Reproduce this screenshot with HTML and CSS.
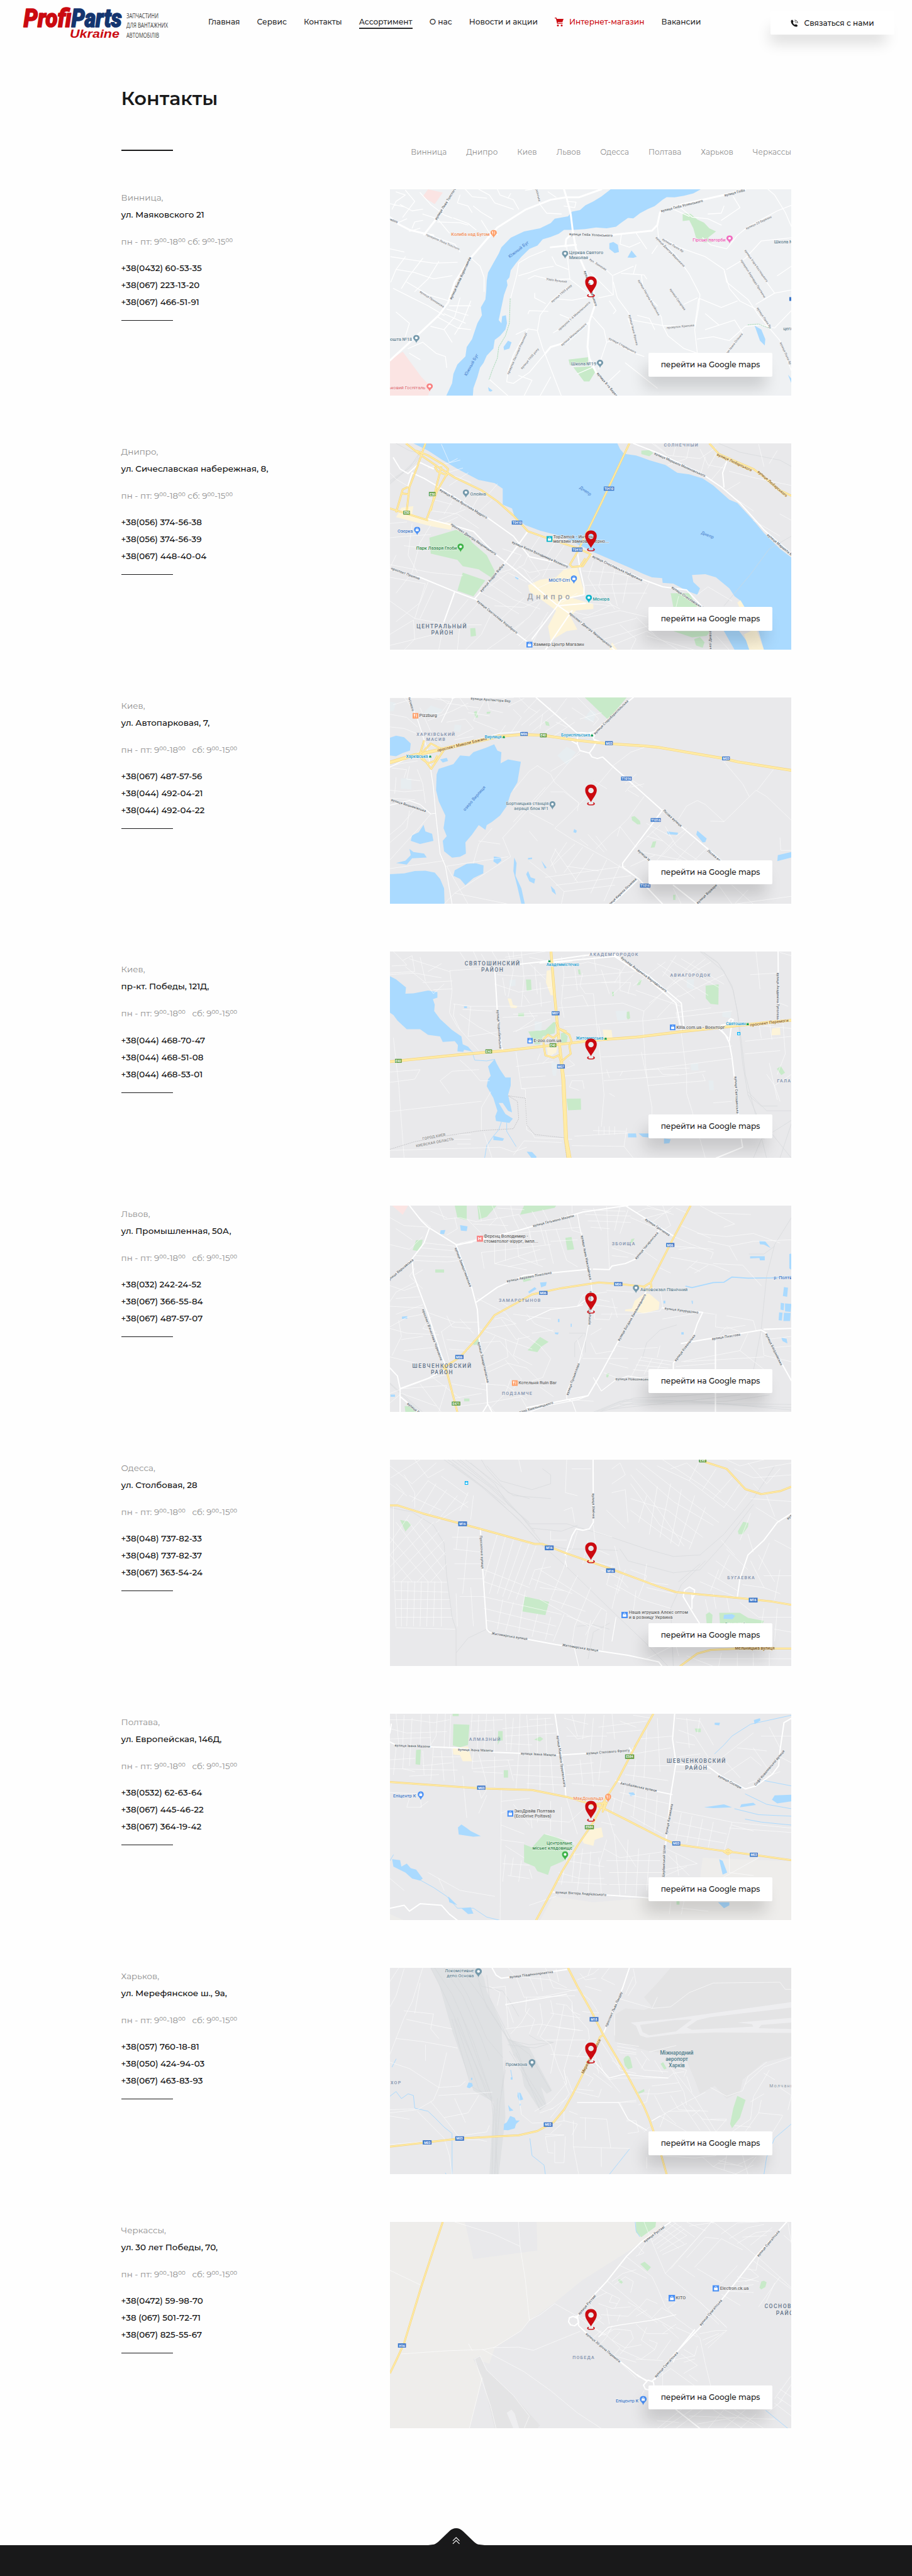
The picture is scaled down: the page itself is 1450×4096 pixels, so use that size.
FILE: index.html
```html
<!DOCTYPE html>
<html lang="ru">
<head>
<meta charset="utf-8">
<title>Контакты</title>
<link rel="stylesheet" href="styles.css">
</head>
<body>
<svg class="defs" aria-hidden="true">
  <symbol id="marker" viewBox="0 0 24 44" preserveAspectRatio="none"><path fill="#cb0a10" fill-rule="evenodd" d="M12 0C5.300 0 0 5.400 0 12c0 9 8 17 12 25 4-8 12-16 12-25C24 5.400 18.700 0 12 0zm0 7.200a5.600 5.600 0 110 11.200 5.600 5.600 0 010-11.200z"/><path fill="none" stroke="#cb0a10" stroke-width="2" d="M7.500 38.500C3 40 5 43 12 43s9-3 4.500-4.500"/></symbol>
  <symbol id="pin" viewBox="0 0 12 17" preserveAspectRatio="none"><path d="M6 0a6 6 0 00-6 6c0 4.200 5 5.500 6 11 1-5.500 6-6.800 6-11a6 6 0 00-6-6z"/><circle cx="6" cy="6" r="2.500" fill="#fff"/></symbol>
  <symbol id="bagpin" viewBox="0 0 12 17" preserveAspectRatio="none"><path d="M6 0a6 6 0 00-6 6c0 4.200 5 5.500 6 11 1-5.500 6-6.800 6-11a6 6 0 00-6-6z"/><path d="M3.200 5h5.600v4H3.200z" fill="#fff"/><path d="M4.500 5c0-2.600 3-2.600 3 0" fill="none" stroke="#fff"/></symbol>
  <symbol id="bag" viewBox="0 0 14 14" preserveAspectRatio="none"><path d="M0 0h14v14H0z"/><path d="M3.200 6h7.600v5H3.200z" fill="#fff"/><path d="M5 6c0-4 4-4 4 0" fill="none" stroke="#fff" stroke-width="1.300"/></symbol>
  <symbol id="food" viewBox="0 0 14 14" preserveAspectRatio="none"><path d="M0 0h14v14H0z"/><path d="M4.500 3v8M9.500 3v8M3.500 3v3h2.200V3" fill="none" stroke="#fff" stroke-width="1.400"/></symbol>
  <symbol id="foodpin" viewBox="0 0 12 17" preserveAspectRatio="none"><path d="M6 0a6 6 0 00-6 6c0 4.200 5 5.500 6 11 1-5.500 6-6.800 6-11a6 6 0 00-6-6z"/><path d="M4.300 3v6.500M7.800 3v6.500M3.500 3v2.500h1.700" fill="none" stroke="#fff"/></symbol>
  <symbol id="metro" viewBox="0 0 9 12" preserveAspectRatio="none"><path d="M0 12L2.500 0 4.500 5 6.500 0 9 12z" fill="#0f9d58"/></symbol>
</svg>

<header class="header">
  <a class="logo" href="#">
    <svg width="240" height="72" viewBox="0 0 240 72">
      <g class="brand"><text x="37.500" y="42.500" textLength="76" lengthAdjust="spacingAndGlyphs" fill="#cb0a10">Profi</text>
      <text x="113.500" y="42.500" textLength="80" lengthAdjust="spacingAndGlyphs" fill="#14356f">Parts</text></g>
      <text class="country" x="111" y="60" textLength="79" lengthAdjust="spacingAndGlyphs">Ukraine</text>
      <g class="tagline"><text x="201" y="28.500" textLength="51" lengthAdjust="spacingAndGlyphs">ЗАПЧАСТИНИ</text>
      <text x="201" y="44" textLength="66" lengthAdjust="spacingAndGlyphs">ДЛЯ ВАНТАЖНИХ</text>
      <text x="201" y="60.200" textLength="52" lengthAdjust="spacingAndGlyphs">АВТОМОБІЛІВ</text></g>
    </svg>
  </a>
  <nav class="nav">
    <a href="#">Главная</a><a href="#">Сервис</a><a href="#">Контакты</a><a href="#" class="active">Ассортимент</a><a href="#">О нас</a><a href="#">Новости и акции</a>
    <a href="#" class="shop"><svg width="14" height="14" viewBox="0 0 14 14"><path fill="#cb0a10" d="M0 0h2.700l.6 2H14l-1.800 5.300H4.800l.2 1.300h7.500v1.200H3.800L1.800 1.200H0z"/><circle cx="5" cy="12.400" r="1.500" fill="#cb0a10"/><circle cx="11" cy="12.400" r="1.500" fill="#cb0a10"/></svg>Интернет-магазин</a><a href="#">Вакансии</a>
  </nav>
  <a class="contact-btn" href="#"><svg width="12" height="12" viewBox="0 0 12 12"><path fill="#19191a" d="M.8 1.600C1.800.4 2.800.1 3.500 1.200l1 1.800c.4.800-.6 1.300-.8 2 .3 1.400 1.500 2.700 2.900 3.300.8 0 1.200-1.200 2-.8l2 1.300c1 .8.200 2-.9 2.700C5.500 12.600-.9 5.700.8 1.600z"/><path fill="none" stroke="#19191a" d="M6.500 3.200c1.400.2 2.200 1 2.400 2.400M6.500 1c2.800.2 4.500 1.900 4.700 4.700"/></svg>Связаться с нами</a>
</header>

<main class="page">
  <h1>Контакты</h1>
  <div class="subnav">
    <span class="rule"></span>
    <nav class="cities"><a href="#">Винница</a><a href="#">Днипро</a><a href="#">Киев</a><a href="#">Львов</a><a href="#">Одесса</a><a href="#">Полтава</a><a href="#">Харьков</a><a href="#">Черкассы</a></nav>
  </div>

  <section class="office">
    <div class="info"><p class="city">Винница,</p><p>ул. Маяковского 21</p><p class="hours">пн - пт: 9⁰⁰-18⁰⁰ сб: 9⁰⁰-15⁰⁰</p><p>+38(0432) 60-53-35</p><p>+38(067) 223-13-20</p><p>+38(067) 466-51-91</p><span class="line"></span></div>
    <div class="map">
      <svg class="pale" viewBox="37 54 1506 1305" preserveAspectRatio="none">
        <g class="hosp"><path d="M180,54 235,75 205,147 160,100zM37,1130 85,1080 155,1240 190,1300 180,1359 37,1359z"/></g>
        <g class="green"><path d="M1135,205 1165,210 1190,245 1215,265 1235,300 1260,320 1230,360 1245,390 1215,390 1185,360 1175,300 1160,250 1135,255zM707,1130 780,1115 780,1165 712,1165zM725,1178 790,1172 808,1205 785,1268 765,1268z"/></g>
        <g class="r1">
          <path d="M60,70 95,90 60,130 45,180M75,150 120,190 160,180M150,75 190,150 240,215 270,235M95,60 130,130 85,230M37,145 90,165M160,210 215,240 260,330M215,260 300,265 330,280M120,300 130,260 160,250M300,90 290,140 330,160 345,200M320,54 345,100 400,110M370,54 410,90 430,140 500,180M350,160 380,200 420,240M440,54 450,90 500,120 520,180M585,54 600,150 625,205 680,210M630,70 660,105M700,130 735,135 730,170 690,160"/>
          <path d="M275,235 330,270 360,310M380,250 410,330 440,340M180,340 280,400 300,450M40,480 120,500 200,520 290,515M60,560 130,580 200,620 270,600M95,480 60,560 40,640M160,490 110,600 80,680M220,510 180,620 130,700M50,680 120,740 180,790 240,850M100,640 180,720 260,760M260,790 340,790M250,810 330,850M240,840 320,900M215,860 290,930 340,940M300,740 280,860 240,940M340,760 310,890 280,970M60,830 110,900 90,1010M190,920 240,940 270,1020M105,1060 160,1020 210,1090 245,1110 250,1180M110,1090 150,1130M340,487 375,540 390,610 390,700"/>
          <path d="M620,440 560,480 520,520 512,600 490,740M520,600 560,580 600,555 650,540M555,620 580,600 640,625 710,620 800,735M645,480 660,530 705,560M700,415 705,520 712,620M740,440 790,500 840,550 872,600 875,720 820,740M875,597 950,540M905,585 990,595 1000,620M790,580 870,715M780,735 720,755 650,745M705,670 640,760 600,850 590,950 610,1060 620,1100 680,1359M580,710 580,740 620,775M555,840 560,820 630,825M555,935 590,945M555,935 500,1100 480,1200 475,1270 500,1280 560,1210 620,1090M770,785 680,930 650,960M675,845 710,870"/>
          <path d="M860,760 885,820 875,840M875,640 890,740 930,830 945,880 1060,915 1080,980 1140,1060 1190,1089M980,595 985,660 1030,800 1055,860 1060,915 1180,920 1195,745M795,855 840,940 850,1020 870,1010 940,1080 990,1110M850,1020 830,1120 820,1190M1040,280 1045,370 1110,470 1160,590 1200,720 1195,800 1180,940 1190,1089M1070,370 1120,420 1220,480 1290,560 1310,680 1350,760 1410,810M1200,745 1280,800 1340,760M1120,160 1170,230 1230,240 1280,280M1100,180 1160,225M1230,210 1280,205 1290,160M1325,100 1350,170 1280,250M1455,54 1480,90 1520,200 1543,290M1543,155 1490,190 1380,290 1340,345 1300,430 1240,405 1210,360"/>
          <path d="M1380,450 1410,540 1450,640 1480,710M1300,560 1370,490 1430,380 1543,360M1290,560 1300,640 1380,750 1420,850 1460,930 1500,1010 1543,1200M1360,510 1400,620 1440,740M1190,1000 1250,985 1310,1010 1370,920 1430,910 1480,930 1543,820M1410,780 1480,710 1543,690M1490,600 1543,540M1300,1080 1340,1000M1220,940 1330,880 1360,960M1220,840 1270,910M1010,740 1040,790M965,850 1010,870 1030,940M930,870 950,960M740,1220 795,1180M520,1230 570,1260 540,1359M410,1255 480,1359M640,1240 600,1359M900,1200 850,1280M920,1150 1040,1310"/>
          <path d="M905,340 900,400 935,420 975,390M960,330 1000,430M1040,410 1020,460M545,60 570,54M490,80 480,110M60,270 100,240M110,320 150,300M37,430 90,450M1140,780 1190,740M960,530 950,590M510,970 555,935"/>
        </g>
        <path class="path-dash" d="M488,745 485,900 470,980 445,1050 440,1120 420,1200 409,1255M1380,910 1420,905 1465,935"/>
        <g class="water"><path d="M865,54 1203,54 1175,80 1140,95 1105,105 1075,104 1060,120 1030,160 1005,178 975,205 950,238 930,235 905,265 885,290 850,300 810,295 770,305 725,310 690,310 670,335 640,355 610,370 590,410 560,430 530,480 510,520 490,565 485,610 475,630 478,660 465,720 460,760 455,800 445,880 455,900 458,855 472,850 476,900 470,940 450,980 430,1005 425,1060 400,1105 388,1150 375,1180 365,1240 350,1310 348,1359 248,1359 270,1280 275,1220 290,1160 320,1110 325,1050 345,1000 355,950 365,900 382,850 378,800 395,750 398,700 400,630 405,580 425,520 445,460 455,420 490,360 540,320 600,300 640,268 655,240 705,225 720,195 750,185 770,155 800,130 830,100zM860,395 875,387 892,405 896,450 880,457 860,430zM943,440 963,480 950,487 928,485zM1405,915 1430,940 1445,1000 1443,1040 1425,1010zM480,1010 493,1020 485,1060 465,1070 463,1050zM405,1303 422,1325 415,1332 408,1328zM1530,1225 1543,1250 1543,1280z"/></g>
        <g class="r3"><path d="M37,230 70,275 110,310 170,335 200,345M165,340 230,200 278,60M37,1135 150,960 220,850 255,770 280,640 340,487 400,370 440,295 545,183 640,120 695,105 745,105 830,54M690,54 700,110 715,210 723,320 735,430 760,530 800,680 805,790 785,890 778,1050 785,1120 810,1210 890,1359M695,415 698,370 715,340 870,342 1020,315 1040,280 1050,200 1130,150 1290,90 1370,54"/><path d="M800,735 805,790M640,420 735,405M620,1090 640,1050 700,1020 780,900"/></g>
        <g class="s"><text x="791" y="341" style="--a:2deg">вулиця Гліба Успенського</text><text x="1132" y="158" style="--a:-14deg">вулиця Гліба Успенського</text><text x="1330" y="75" style="--a:-15deg">вулиця Гліба</text><text x="245" y="145" style="--a:-58deg">вулиця Льва Толстого</text><text x="301" y="615" style="--a:-65deg">вулиця Князів Коріатовичів</text><text x="50" y="250" style="--a:24deg">ького</text><text x="790" y="680" style="--a:72deg">вулиця Маяковського</text><text x="852" y="1286" style="--a:50deg">вулиця 8-го Берез</text></g>
        <g class="s thin"><text x="236" y="385" style="--a:24deg">провулок Льва Толстого</text><text x="1089" y="448" style="--a:46deg">вулиця Дмитра Марковича</text><text x="1099" y="407" style="--a:31deg">вулиця Палія Яр</text><text x="1420" y="263" style="--a:-25deg">вулиця 20 Березня</text><text x="1412" y="537" style="--a:55deg">вулиця Ігоря Костецького</text><text x="1400" y="618" style="--a:58deg">провулок Бернарда Претвича</text><text x="726" y="970" style="--a:-41deg">вулиця Маяковського</text><text x="728" y="853" style="--a:-42deg">провулок 1-й Маяковського</text><text x="680" y="710" style="--a:-40deg">вулиця 1905 року</text><text x="561" y="1122" style="--a:-50deg">вулиця 1905 року</text><text x="513" y="1090" style="--a:-66deg">провулок Лютневої Революції</text><text x="951" y="943" style="--a:76deg">вулиця Івана Франка</text><text x="1009" y="738" style="--a:60deg">вулиця Нагірна Альпійська</text><text x="1117" y="749" style="--a:55deg">вулиця Суворова</text><text x="1127" y="919" style="--a:-5deg">провулок Крилова</text><text x="910" y="1039" style="--a:28deg">вулиця Старицького</text><text x="1441" y="865" style="--a:57deg">вулиця Палія Яр</text><text x="818" y="528" style="--a:33deg">вул. Замкова</text><text x="195" y="747" style="--a:33deg">вулиця Примакова</text><text x="592" y="80" style="--a:76deg">Українська</text><text x="1522" y="1090" style="--a:66deg">вулиця Палія Яр</text><text x="662" y="628" style="--a:8deg">Узвіз Бузький</text><text x="1321" y="1042" style="--a:-52deg">вулиця Івана Огієнка</text></g>
        <g class="s river"><text x="520" y="435" style="--a:-38deg">Южный Буг</text><text x="343" y="1163" style="--a:-61deg">Южный Буг</text></g>
        <g class="e"><text x="411" y="338" fill="#f2905a">Колиба над Бугом</text><text x="1296" y="372" fill="#ee5fb7">Гірські пагорби</text><text x="811" y="1158">Школа №19</text><text x="170" y="1307" fill="#e8797d">ьковий Госпіталь</text><text x="120" y="1001">пошта №18</text></g>
        <g class="l"><text x="709" y="454">Церква Святого</text><text x="709" y="484">Миколая</text><text x="1478" y="385">Школа №</text><text x="1512" y="934">цегл</text></g>
        <use href="#foodpin" x="414" y="310" width="24" height="52" fill="#ff9e67"/><use href="#pin" x="1299" y="345" width="24" height="52" fill="#f06fc0"/><use href="#pin" x="682" y="441" width="24" height="52" fill="#7599ab"/><use href="#pin" x="813" y="1131" width="24" height="52" fill="#7599ab"/><use href="#pin" x="124" y="974" width="24" height="52" fill="#7599ab"/><use href="#pin" x="174" y="1280" width="24" height="52" fill="#f88181"/>
        <rect class="bb" x="1535" y="735" width="20" height="24"/>
        <use href="#marker" x="769" y="603" width="44" height="133"/>
      </svg>
      <a class="map-btn" href="#">перейти на Google maps</a>
    </div>
  </section>

  <section class="office">
    <div class="info"><p class="city">Днипро,</p><p>ул. Сичеславская набережная, 8,</p><p class="hours">пн - пт: 9⁰⁰-18⁰⁰ сб: 9⁰⁰-15⁰⁰</p><p>+38(056) 374-56-38</p><p>+38(056) 374-56-39</p><p>+38(067) 448-40-04</p><span class="line"></span></div>
    <div class="map">
      <svg viewBox="37 54 1506 1305" preserveAspectRatio="none">
        <g class="water"><path d="M125,54 890,54 900,90 915,120 960,130 1010,160 1070,190 1115,240 1160,250 1210,275 1250,320 1310,410 1340,430 1400,540 1440,620 1500,720 1543,775 1543,1359 1440,1359 1420,1240 1350,1045 1330,1020 1310,970 1260,900 1220,880 1170,885 1175,930 1200,970 1190,1010 1150,985 1100,940 1060,935 1058,905 1020,900 990,880 930,835 800,740 740,690 680,640 600,605 545,570 505,520 495,465 460,440 460,340 430,305 370,285 290,215 235,160 180,100zM1210,1089 1280,1089 1400,1359 1330,1359 1290,1240zM330,710 335,770 315,765 308,735zM505,893 520,905 517,915 508,905z"/></g>
        <g class="sand"><path d="M1340,1060 1352,1045 1400,1180 1440,1359 1385,1359 1365,1260 1390,1240zM80,460 125,450 120,500 180,540 270,560 265,600 200,580 175,570 60,520zM690,850 740,840 760,960 770,1010 720,1030 800,1070 800,1100 735,1110 715,1150 740,1230 700,1240 640,1300 630,1210 660,1110 620,1060 560,990 555,950 600,915 660,900zM870,1310 890,1359 860,1359z"/></g>
        <g class="green"><path d="M285,600 330,640 345,680 400,760 430,860 425,910 370,850 310,830 290,790 190,750 185,650zM310,870 395,920 350,1020 290,985zM980,100 1010,97 1025,115 1010,135 980,122zM1090,1000 1160,1000 1190,1089 1100,1089zM1100,1240 1240,1240 1225,1270 1170,1280zM1178,1290 1200,1278 1217,1310 1210,1345 1185,1330zM338,1222 357,1220 360,1270 340,1275z"/></g>
        <g class="rail"><path d="M37,290 90,230 140,150 150,100 170,60M37,300 110,210 145,120M60,54 110,100 160,120 130,180 37,310M1270,54 1350,110 1500,160 1543,200M1543,640 1460,720 1390,880 1290,1080"/></g>
        <g class="r1">
          <path d="M230,60 260,175 290,150M180,210 300,160M250,240 310,210M330,240 260,320M280,260 340,300M440,310 400,390M340,340 300,470M380,360 340,480M420,410 360,500M180,400 270,440M190,480 290,500 370,590M220,540 320,470M280,390 240,500M240,560 290,520M37,240 60,280 100,320M37,560 100,550M37,650 100,640 190,630M120,560 105,760 140,870M190,570 150,680 120,870 60,1000M37,820 190,870 310,890M90,700 180,720M37,900 170,940 130,1160M60,760 37,840M180,930 150,1060 60,1180M37,1050 130,1160 260,1200 380,1200M37,1260 125,1170 130,1290 90,1359M280,1000 240,1180 220,1359M37,1330 230,1250M330,1040 260,1180M200,980 150,1160M370,1060 300,1190 290,1359M420,1120 380,1260 320,1359"/>
          <path d="M410,960 480,870 550,930M380,1000 440,1050 520,1130M410,940 500,1040 600,1100M440,890 530,1000M550,610 520,700 460,820M460,720 530,760 490,850 450,870M600,640 560,740 540,820 500,860M660,670 620,780M690,700 650,800M520,830 560,870 620,850 700,850M560,780 600,880 560,930M640,800 610,900M540,850 590,970 680,900M760,860 870,870 960,900 1000,940M800,800 780,900 830,1040 900,1100M840,830 820,960 880,1100M880,850 870,950 890,1080M770,950 980,940M780,1000 1000,1000M930,890 910,1060M1010,930 960,1100M760,1060 870,1080M680,1060 740,1000M700,1110 780,1140 860,1080M430,1080 540,1090 620,1020M450,1170 500,1090 540,1030M490,1240 560,1150 600,1060M520,1330 600,1200 630,1120M400,1359 500,1240 540,1180M610,1180 560,1359M760,1160 900,1110 1000,1150M800,1230 960,1160M840,1290 1020,1200M870,1330 1000,1240 1120,1359M900,1200 960,1290 940,1359M960,1150 1040,1280M1000,1270 1180,1359M1260,1270 1310,1359"/>
          <path d="M1020,54 1080,130 1200,150 1260,80M1110,60 1100,130M1160,70 1150,150 1080,190M1200,90 1230,190 1290,210M1070,110 1030,60M1140,200 1200,230M1220,140 1200,260M1260,120 1230,210M1300,170 1240,290M1350,300 1300,350M1310,230 1400,270 1543,320M1420,60 1440,200M1490,100 1460,180M1330,400 1400,480M1400,540 1500,640M1500,500 1543,540M1190,1010 1230,960 1320,1050M1100,980 1200,1089M1110,1089 1120,1020"/>
        </g>
        <g class="r3"><path d="M50,145 75,215 105,245 150,175 200,215M103,330 120,240 165,275 240,350 400,520 500,640 560,770 700,820M175,530 280,575 350,610 430,750 520,870 660,1070 720,1140 880,1359M37,850 150,900 280,990 360,1040 500,1240 570,1330M280,990 240,1180M355,1035 465,815 555,610M740,740 750,850 765,960 765,1010 680,1040 665,1080 770,1065M665,1080 570,1290M720,1110 620,1359M950,54 1050,120 1210,250 1280,330 1350,430 1440,600 1543,750M1300,170 1285,240 1290,330M780,750 980,910 1060,960 1150,980 1210,1089"/></g>
        <g id="y2"><path d="M97,54 150,125 215,200 280,270 380,350 440,420 500,510 555,610 640,660 740,715 790,755 760,830 720,835 712,820 740,740 830,430 935,54M770,780 750,830M170,54 140,200 110,330 100,480M250,250 215,350 175,530M135,100 180,130 240,190 255,215 250,255 215,230 205,200M105,330 85,345 60,490M105,375 80,370M37,465 180,540M1235,54 1270,120 1330,165 1400,215 1450,280 1500,350 1543,385M230,200 215,300 190,480"/></g>
        <use class="yc" href="#y2"/><use class="yi" href="#y2"/>
        <g class="s"><text x="313" y="435" style="--a:31deg">вулиця Князя Ярослава Мудрого</text><text x="351" y="658" style="--a:34deg">проспект Дмитра Яворницького</text><text x="600" y="755" style="--a:24deg">вулиця Князя Володимира Великого</text><text x="890" y="842" style="--a:26deg">вулиця Січеславська Набережна</text><text x="1155" y="1030" style="--a:34deg">вулиця Січеславська Н</text><text x="1125" y="188" style="--a:24deg">вулиця Маршала Малиновського</text><text x="1500" y="695" style="--a:40deg">вулиця Маршала М</text><text x="420" y="903" style="--a:-50deg">вулиця Андрія Фабра</text><text x="95" y="875" style="--a:20deg">проспект Пушкіна</text><text x="440" y="1150" style="--a:39deg">вулиця Святослава Хороброго</text><text x="790" y="1233" style="--a:39deg">проспект Дмитра Яворницького</text><text x="1238" y="1300" style="--a:-90deg">ської Дивізії</text></g>
        <g class="s amber"><text x="1330" y="172" style="--a:25deg">вулиця Любарського</text><text x="1473" y="308" style="--a:41deg">вулиця Любарського</text></g>
        <g class="s river"><text x="770" y="355" style="--a:35deg">Днепр</text><text x="1228" y="634" style="--a:22deg">Днепр</text></g>
        <g class="d"><text x="232" y="1208">ЦЕНТРАЛЬНЫЙ</text><text x="234" y="1248">РАЙОН</text></g><g class="d sub"><text x="1130" y="66">СОЛНЕЧНЫЙ</text></g>
        <text class="town" x="637" y="1021">Днипро</text>
        <g class="l dark"><text x="649" y="643">TopZamok - Интерне</text><text x="649" y="673">магазин замков, дверно...</text><text x="575" y="1322">Хаммер Центр Магазин</text></g>
        <g class="l"><text x="338" y="374">Олейна</text><text x="798" y="1039" fill="#24959c">Менора</text></g>
        <g class="e"><text x="123" y="609" fill="#4479c5">Озерка</text><text x="288" y="716" fill="#2a8740">Парк Лазаря Глоби</text><text x="712" y="917" fill="#4479c5">МОСТ-Сіті</text></g>
        <use href="#pin" x="310" y="345" width="24" height="54" fill="#7599ab"/><use href="#bagpin" x="127" y="580" width="24" height="54" fill="#4a90f5"/><use href="#pin" x="290" y="687" width="24" height="54" fill="#3eb349"/><use href="#bagpin" x="715" y="888" width="24" height="54" fill="#4a90f5"/><use href="#pin" x="771" y="1009" width="24" height="54" fill="#12b5cb"/><use href="#bag" x="624" y="639" width="23" height="38" fill="#12b5cb"/><use href="#bag" x="549" y="1306" width="23" height="38" fill="#4a90f5"/>
        <rect class="bb" x="839" y="327" width="39" height="26"/><rect class="bb" x="494" y="542" width="39" height="25"/><rect class="bb" x="720" y="712" width="39" height="26"/><rect class="bg" x="183" y="361" width="25" height="26"/><rect class="bg" x="87" y="480" width="25" height="24"/>
        <g class="bt"><text x="858" y="341">T0410</text><text x="514" y="555">T0410</text><text x="740" y="725">T0410</text><text x="196" y="374">E50</text><text x="100" y="492">E50</text></g>
        <use href="#marker" x="769" y="603" width="44" height="133"/>
      </svg>
      <a class="map-btn" href="#">перейти на Google maps</a>
    </div>
  </section>

  <section class="office">
    <div class="info"><p class="city">Киев,</p><p>ул. Автопарковая, 7,</p><p class="hours">пн - пт: 9⁰⁰-18⁰⁰ &nbsp; сб: 9⁰⁰-15⁰⁰</p><p>+38(067) 487-57-56</p><p>+38(044) 492-04-21</p><p>+38(044) 492-04-22</p><span class="line"></span></div>
    <div class="map">
      <svg viewBox="37 54 1506 1305" preserveAspectRatio="none">
        <g class="green"><path d="M768,54 925,54 855,195zM352,145 362,138 368,180 358,182zM400,145 415,143 412,155 400,157zM618,202 632,210 636,235 622,230zM943,808 955,804 975,835 977,855 965,855 945,830zM1023,965 1036,962 1030,1000 1015,1003zM85,598H93V627H85zM1099,1300H1108V1333H1099z"/></g>
        <g class="pool"><path d="M37,80 60,90 50,140 37,140zM190,105 235,130 210,180 165,150zM665,420 700,365 735,400 700,480zM790,130 810,150 800,210 765,190zM280,225 305,230 300,275 277,265zM78,565 117,565 117,635 78,630z"/></g>
        <g class="water"><path d="M37,308 60,295 90,305 115,345 112,390 85,405 60,425 37,420zM220,505 275,475 300,420 335,425 350,400 400,370 428,350 440,390 455,400 452,470 480,445 528,460 520,540 515,590 490,660 475,740 450,800 420,840 400,860 395,890 370,860 345,920 320,970 322,1040 300,1060 270,1066 240,1025 235,960 250,930 238,880 245,800 220,710 210,640 212,540zM225,445 250,435 255,455 235,465zM163,858 170,900 195,915 200,960 150,980 115,960 120,925 145,905zM325,1105 360,1102 388,1115 387,1165 350,1195 320,1240 300,1200 275,1180 280,1145zM427,1058 452,1065 455,1085 440,1107 425,1090zM37,1170 90,1165 130,1150 170,1148 205,1160 225,1200 240,1260 242,1359 37,1359zM503,1065 512,1100 508,1180 530,1260 543,1359 530,1359 515,1250 500,1150zM555,1150 565,1190 582,1200 578,1230 560,1215 548,1170zM605,1085 625,1130 618,1135zM1076,900 1118,908 1115,922 1080,918zM1190,895 1225,945 1220,968 1210,970 1186,920zM728,885 738,895 735,910 725,905zM1492,1050 1543,1030 1543,1065 1490,1088zM110,1010 125,1030 165,1040 175,1065 120,1070 100,1110 60,1100 95,1085 115,1050zM640,1245 655,1270 660,1300 645,1280zM555,1068 570,1065 570,1075 555,1078z"/></g>
        <g class="r1">
          <path d="M37,160 100,180 140,240M50,100 110,70M90,54 120,120M37,240 90,250 150,290M180,54 260,80 230,150 170,170M180,200 270,140 330,90M150,120 190,270 230,350M250,210 320,190 350,250 290,300M220,54 250,90 370,120M390,80 350,200 440,260M330,150 410,170M400,54 410,130 460,150M300,60 330,130M430,90 470,60 480,90M470,230 450,280M500,130 530,180 490,280M520,54 560,120 590,150M590,60 540,150M480,110 540,60M530,230 600,130M570,270 660,150M600,250 610,160M640,120 560,230M620,270 700,180M650,300 730,210M660,210 700,240M700,60 660,150M740,54 820,190 800,230M720,120 800,210M750,190 830,150M280,320 350,300M37,490 80,470 140,455M45,500 100,510 90,560M110,490 100,570 150,580M37,640 90,650 160,640M37,690 130,700M60,560 55,660M140,510 160,600 170,720M130,760 80,860 37,920M190,790 150,870 80,1000 37,1080"/>
          <path d="M750,390 700,480 650,580 520,830 460,940 480,1020 490,1060 280,1290 240,1359M590,485 640,540 655,590 745,720M590,485 560,520 500,640M875,490 800,640 700,810 655,880 720,950 860,1080 970,1200M650,860 560,780M640,650 690,650 745,720 740,770M560,720 620,770M620,620 500,840M420,880 370,980 350,1100M370,960 450,980M590,960 560,900M655,1010 700,1120 740,1220M660,1010 640,1080 660,1160M560,1090 630,1180 690,1280 880,1240M690,1280 680,1359M730,980 650,1110M760,1000 690,1160M800,1040 730,1210M850,1080 790,1290M900,1110 840,1340M620,1190 920,1120M660,1240 940,1180M700,970 640,1120M750,950 780,990M780,920 840,1030M810,930 850,1020M700,1120 820,1150M890,930 900,870 870,910 810,1010M900,870 960,1000M990,680 930,820 900,870M800,580 850,630M920,600 960,540M940,620 990,600M930,640 970,680M920,650 950,590M930,560 985,620"/>
          <path d="M750,410 640,520M870,490 940,400 990,370M1070,870 1110,990 1190,1080M1050,860 960,1000M1000,850 1090,930M1100,960 1030,1100M1150,900 1060,1050M1180,960 1090,1120M1230,1000 1130,1160M1020,900 1130,1060 1230,1160M1000,1080 1100,1150M980,1030 1130,1080M940,1120 1030,1050M1110,930 1150,880M1000,930 1060,960M1290,460 1360,600 1385,680M1475,510 1415,640M1120,820 1150,740 1190,705 1220,730 1290,838 1350,740 1410,640 1450,680 1543,830M1240,835 1290,838M1500,940 1503,1020 1543,1020M1100,1260 1130,1359M1240,1170 1320,1359M1320,1240 1400,1359M1380,1270 1330,1359 1543,1310M250,1120 480,1060M37,1135 240,1085M250,1120 330,1359M280,1290 480,1359M37,970 100,880 110,770"/>
        </g>
        <g class="r2"><path d="M105,54 140,190 180,400 200,620 208,780 225,1040 245,1120 270,1359M185,350 230,380 215,360M145,400 37,495M275,54 230,210M208,785 190,790 150,730 110,705 37,735M37,55 500,54M230,380 450,280 530,270"/></g>
        <g class="r3"><path d="M585,54 740,280M950,54 900,120 805,270 780,280M740,280 755,275 780,280 805,290 800,310 810,340 800,370 785,405 750,390 740,350zM805,320 840,345M720,330 740,350M785,405 795,430 815,440 835,430 870,485 1060,770 1250,1040 1310,1130M1060,765 910,1100 910,1125 970,1200 1060,1359M1100,1240 1190,1359M965,1210 870,1359M1260,1240 1185,1359M270,60 280,54"/></g>
        <g id="y3"><path d="M37,467 120,425 240,380 450,300 530,288 610,293 740,325 850,345 990,360 1040,368 1290,440 1340,460 1543,515M37,462 120,420 240,376 450,295"/></g>
        <use class="yc wide" href="#y3"/><use class="yi wide" href="#y3"/>
        <g id="y3b"><path d="M165,325 150,410 192,505 240,385 220,370 190,345 165,390 150,410 155,440 180,470 205,455 215,420"/></g>
        <use class="yc" href="#y3b"/><use class="yi" href="#y3b"/>
        <g class="s"><text x="415" y="68" style="--a:4deg">вулиця Архітектора Вер</text><text x="866" y="178" style="--a:-45deg">вулиця Старобориспільська</text><text x="116" y="88" style="--a:75deg">ульського</text><text x="107" y="735" style="--a:18deg">вулиця Вишняківська</text><text x="1097" y="816" style="--a:42deg">Лісова вулиця</text><text x="1255" y="1055" style="--a:40deg">Лісова вул</text><text x="993" y="1055" style="--a:42deg">вулиця Іва</text><text x="905" y="1287" style="--a:-44deg">вулиця Кирила Осьмака</text><text x="1225" y="1295" style="--a:-44deg">вулиця Варвари</text></g>
        <g class="s amber big"><text x="308" y="351" style="--a:-14deg">проспект Миколи Бажана</text></g>
        <g class="s river"><text x="354" y="692" style="--a:-49deg">озеро Вирлиця</text></g>
        <g class="d sub"><text x="210" y="287">ХАРКІВСЬКИЙ</text><text x="210" y="319">МАСИВ</text></g>
        <g class="l"><text x="147" y="168" fill="#666">Pizzburg</text></g>
        <g class="e teal"><text x="456" y="305">Вирлиця</text><text x="180" y="426">Харківська</text><text x="788" y="292">Бориспільська</text></g>
        <g class="e"><text x="632" y="723">Бортницька станція</text><text x="632" y="754">аерації блок №1</text></g>
        <use href="#metro" x="459" y="295" width="10" height="16"/><use href="#metro" x="183" y="418" width="10" height="16"/><use href="#metro" x="790" y="284" width="10" height="16"/>
        <use href="#food" x="122" y="151" width="22" height="37" fill="#ff9e67"/><use href="#pin" x="635" y="709" width="23" height="54" fill="#7599ab"/>
        <rect class="bb" x="526" y="272" width="28" height="25"/><rect class="bg" x="600" y="281" width="25" height="25"/><rect class="bb" x="844" y="330" width="29" height="25"/><rect class="bb" x="1283" y="427" width="29" height="24"/><rect class="bb" x="904" y="554" width="40" height="25"/><rect class="bb" x="1015" y="816" width="38" height="24"/><rect class="bb" x="975" y="1230" width="39" height="25"/>
        <g class="bt"><text x="540" y="284">M06</text><text x="612" y="294">E40</text><text x="859" y="343">M03</text><text x="1298" y="440">M03</text><text x="924" y="567">T1016</text><text x="1034" y="828">T1016</text><text x="994" y="1243">T1016</text></g>
        <use href="#marker" x="769" y="603" width="44" height="133"/>
      </svg>
      <a class="map-btn up" href="#">перейти на Google maps</a>
    </div>
  </section>

  <section class="office">
    <div class="info lower"><p class="city">Киев,</p><p>пр-кт. Победы, 121Д,</p><p class="hours">пн - пт: 9⁰⁰-18⁰⁰ &nbsp; сб: 9⁰⁰-15⁰⁰</p><p>+38(044) 468-70-47</p><p>+38(044) 468-51-08</p><p>+38(044) 468-53-01</p><span class="line"></span></div>
    <div class="map">
      <svg viewBox="37 54 1506 1305" preserveAspectRatio="none">
        <g class="green"><path d="M547,231H566L568,298 550,302zM518,443 540,441 540,465 518,465zM556,560 620,550 650,500 660,500 655,570 610,590 600,640 580,640zM678,570 690,565 704,590 700,630 678,632zM699,984 753,983 754,1053 705,1057zM1221,270 1270,262 1269,390 1240,385 1222,350zM925,435 935,432 938,475 930,483 924,470zM972,235 982,230 975,265 963,268zM742,168 750,166 753,200 745,198zM870,308H877V335H870zM1488,795 1503,778 1519,820 1505,835z"/></g>
        <g class="pool"><path d="M485,235 508,230 508,270 485,275zM580,495 607,500 605,555 580,550zM642,755 665,755 660,840 648,840zM883,430 925,425 925,485 890,490zM1165,765 1192,760 1195,805 1168,805zM1232,870 1250,868 1252,930 1235,930zM1285,435 1318,433 1315,475 1283,465zM1150,230 1178,230 1175,295 1150,280z"/></g>
        <g class="sand"><path d="M478,350 492,352 498,390 516,400 510,412 490,410zM625,175 640,170 650,330 640,330 622,250zM835,548 868,550 872,600 840,600zM625,660 665,660 660,695 630,715zM1470,540 1500,535 1502,580 1468,583z"/></g>
        <g class="water"><path d="M37,210 60,230 97,280 95,320 125,318 180,300 215,310 215,345 198,355 205,390 203,430 225,480 270,550 305,590 310,640 330,655 345,685 315,675 312,688 290,685 292,645 280,620 235,625 225,590 180,580 150,545 100,545 65,490 50,455 37,440zM430,733 437,760 450,800 470,850 490,850 490,900 480,960 490,1030 495,1070 480,1060 460,1010 445,1010 470,1080 498,1110 485,1137 435,1125 432,1095 440,1060 425,980 400,905 405,860 415,840 405,780zM930,1203 960,1203 962,1228 930,1228zM970,1203 1007,1203 1007,1228 985,1225zM1065,1235 1090,1240 1085,1265 1065,1268zM550,1318 570,1320 587,1350 585,1359 568,1359zM425,1218 465,1235 460,1250 425,1245zM315,400H326V412H315z"/></g>
        <g class="stream"><path d="M345,685 355,740 400,745 430,735M455,1130 445,1180 425,1220 400,1280 392,1359M475,1137 475,1190 510,1285"/></g>
        <g class="rail"><path d="M1205,54 1270,130 1320,270 1340,430 1360,760 1380,960 1420,1110 1440,1240M1200,54 1290,180M1215,60 1265,120 1290,180 1325,300 1345,480 1370,830 1400,1030 1450,1359M1380,960 1430,1030 1490,1030M1380,940 1450,1060 1543,1060M1543,1120 1430,1240 1400,1359M1543,1140 1500,1359M1410,1080 1543,1359"/></g>
        <g class="r1">
          <path d="M50,54 90,120 100,140 45,145M85,110 120,80 130,180 37,190M110,100 260,180M95,150 170,250 200,320 240,260M150,90 170,240M37,200 130,190 230,220M230,130 180,180M262,175 430,155M262,175 270,300 260,440 290,530 370,680M270,240 160,250M200,295 270,290M275,385 340,400 540,400 640,370M280,385 275,460 300,550M310,420 420,430M300,450 370,530 450,600M340,400 330,590 450,560M420,54 440,110 530,90M440,200 530,210 620,200M480,60 500,170 480,340M530,54 540,220 530,400M560,130 620,230M430,260 520,310 640,280M460,220 470,330M580,150 590,320M500,450 640,440M460,470 590,460M500,560 640,480M540,330 560,380M600,250 605,400M640,120 560,90"/>
          <path d="M680,90 690,190 680,380 690,470M700,150 780,120 900,170M690,220 960,180M680,270 900,240M760,190 750,270 770,320 800,320 835,860 840,960 830,1160M670,410 910,380 990,430 985,480 995,760 1005,900M690,530 1000,490 1320,430M690,350 760,330 780,400M730,160 740,300M800,54 810,180M830,170 860,320M900,170 900,300 960,330M830,250 940,250 930,320M920,140 880,250M950,200 870,330M820,520 830,600M1040,470 1120,330M990,430 1180,110M960,300 1130,400M950,270 1070,120M1010,380 1220,100M1060,180 1180,350M1000,220 1120,380M1040,130 1230,330M1090,110 1270,280M1130,100 1290,260M1120,340 1290,200M1100,260 1240,120M1110,80 1060,210M1240,410 1110,440 1130,560M830,720 1130,690 1320,650M690,840 1000,800 1160,790M840,870 1120,835 1220,810M1000,800 1320,730M1005,900 1220,870 1210,830M1130,570 1150,830 1150,950 1170,1060 1220,1359M980,690 1000,850M1040,790 1060,830 1120,830M710,740 730,770 700,790M860,850 850,800M900,840 910,810M720,870 760,870 765,920M720,870 710,910 745,930M860,950 880,970"/>
          <path d="M510,690 530,920 690,900M530,920 545,925 550,1180 570,1200 580,1230 720,1240M510,780 650,750M530,850 620,840M37,880 130,860 150,800 37,815M50,600 70,900 90,1359M225,870 270,810 370,800M225,870 260,950M300,740 340,800 375,870 410,870M37,1065 380,1000M415,940 380,1040 380,1180M290,1210 340,1210M280,1240 340,1240M290,1270 340,1270M37,1310 450,1290 500,1320 550,1290M390,1200 420,1359M500,1340 540,1250 680,1260M720,1280 915,1285 950,1359M915,1285 925,1170M820,1160 820,1210M840,1160 840,1210M860,1160 860,1210M880,1160 880,1210M800,1185 920,1190M730,1220 930,1200M1005,900 1020,1040 1020,1089M1250,1010 1320,1000M1450,830 1480,900 1500,1000M1460,760 1490,990M1543,830 1480,900M1410,54 1420,200 1425,290M1500,60 1543,80M1500,380 1530,400M1350,510 1543,540M1420,500 1430,600M1460,490 1470,610M1510,480 1520,700 1490,830M1370,620 1543,590M1370,700 1500,680"/>
          <path d="M470,90 620,54M300,60 340,160M350,54 380,160M380,70 410,160M600,700 590,740M610,760 650,700M500,54 500,90M560,430 580,480 510,560M760,580 780,690M900,54 870,90M800,60 760,90M1390,200 1490,190"/>
        </g>
        <path class="border" d="M37,1303 130,1255 240,1220 380,1185 500,1173 520,1110 515,1000 480,965 545,980 550,1150 580,1210 690,1230 700,1359"/>
        <g class="r3"><path d="M525,133 600,120 770,78 800,75M600,127 880,85 1000,220 1110,380 1130,555M880,75 1010,210 1130,380 1140,550M640,127 720,112M1493,54 1495,450 1495,495M430,160 440,440 455,660 460,672M1270,540 1295,580 1310,630 1320,720 1345,1089M1310,620 1320,500 1325,485 1315,478 1308,490 1310,510 1280,520 1275,540 1305,600M1355,1240 1360,1290 1260,1359M1120,560 1145,555"/></g>
        <g id="y4"><path d="M37,750 300,705 470,680 650,645 800,615 960,595 1130,560 1270,535 1460,500 1543,488M641,54 655,340 670,600 690,870 700,1240 713,1359M675,680 685,860 695,1240 705,1359"/></g>
        <use class="yc wide" href="#y4"/><use class="yi wide" href="#y4"/>
        <g id="y4b"><path d="M660,500 670,540 710,580 718,620 710,650 715,700 700,720 680,750M670,570 650,600 630,580 612,610 615,660 620,710 650,725 670,710 680,750M700,560 670,540"/></g>
        <use class="yc" href="#y4b"/><use class="yi" href="#y4b"/>
        <g class="s"><text x="447" y="545" style="--a:86deg">вулиця Чорнобильська</text><text x="990" y="198" style="--a:37deg">бульвар Академіка Вернадського</text><text x="1493" y="335" style="--a:90deg">вулиця Академіка Туполєва</text><text x="1338" y="960" style="--a:87deg">вулиця Святошинська</text></g>
        <g class="s amber big"><text x="1460" y="504" style="--a:-7deg">проспект Перемоги</text></g>
        <g class="s gray"><text x="202" y="1221" style="--a:-11deg">ГОРОД КИЕВ</text><text x="205" y="1258" style="--a:-11deg">КИЕВСКАЯ ОБЛАСТЬ</text></g>
        <g class="d"><text x="422" y="130">СВЯТОШИНСКИЙ</text><text x="422" y="168">РАЙОН</text></g>
        <g class="d sub"><text x="878" y="72">АКАДЕМГОРОДОК</text><text x="1165" y="205">АВИАГОРОДОК</text><text x="1516" y="874">ГАЛА</text></g>
        <g class="l teal"><text x="624" y="136">Академмістечко</text></g><g class="e teal"><text x="838" y="602">Житомирська</text><text x="1372" y="510">Святошин</text></g>
        <g class="l dark"><text x="576" y="616">E-zoo.com.ua</text><text x="1111" y="532">Killa.com.ua - Военторг</text></g>
        <use href="#metro" x="630" y="106" width="10" height="16"/><use href="#metro" x="841" y="595" width="10" height="16"/><use href="#metro" x="1374" y="503" width="10" height="16"/>
        <use href="#bag" x="552" y="599" width="21" height="37" fill="#4a90f5"/><use href="#bag" x="1087" y="515" width="21" height="37" fill="#4a90f5"/><use href="#bag" x="1339" y="562" width="13" height="21" fill="#12b5f5"/>
        <rect class="bb" x="644" y="431" width="29" height="26"/><rect class="bb" x="664" y="767" width="29" height="26"/><rect class="bg" x="636" y="633" width="25" height="25"/><rect class="bg" x="395" y="672" width="25" height="25"/><rect class="bg" x="56" y="732" width="25" height="25"/>
        <g class="bt"><text x="658" y="445">M07</text><text x="678" y="780">M07</text><text x="648" y="646">E40</text><text x="407" y="685">E40</text><text x="68" y="745">E40</text></g>
        <use href="#marker" x="769" y="603" width="44" height="133"/>
      </svg>
      <a class="map-btn up" href="#">перейти на Google maps</a>
    </div>
  </section>

  <section class="office">
    <div class="info"><p class="city">Львов,</p><p>ул. Промышленная, 50А,</p><p class="hours">пн - пт: 9⁰⁰-18⁰⁰ &nbsp; сб: 9⁰⁰-15⁰⁰</p><p>+38(032) 242-24-52</p><p>+38(067) 366-55-84</p><p>+38(067) 487-57-07</p><span class="line"></span></div>
    <div class="map">
      <svg viewBox="37 54 1506 1305" preserveAspectRatio="none">
        <g class="hosp"><path d="M45,54H105L85,112z"/></g>
        <g class="green"><path d="M280,54 325,54 325,145 290,130zM365,54 437,54 400,125 370,142zM540,54 660,54 655,68 525,112zM135,272 160,270 155,310 140,340 122,335zM695,258 718,252 728,330 702,335zM207,457H240V477H207zM532,505 560,498 567,525 538,537zM600,883 632,915 605,945 590,980 553,968zM350,905 368,895 372,930 350,935zM92,1320 125,1320 135,1359 95,1359zM315,1273H335V1290H315zM850,1115 860,1115 855,1140 848,1138zM943,265 955,262 945,290 938,288z"/></g>
        <g class="sand"><path d="M990,610 1010,610 1048,665 1045,710 990,735 960,725 918,720 920,710 945,705 955,655z"/></g>
        <g class="water"><path d="M300,177 328,185 325,215 303,212zM227,210 245,208 240,235 225,232zM600,540 625,537 622,560 604,570zM555,598 580,568 587,580 560,608zM1422,275 1445,280 1465,322 1440,300 1425,298zM1388,374 1443,374 1443,400 1425,400 1423,385 1388,388zM1535,360 1543,357 1543,460 1535,450zM1515,568 1530,572 1527,630 1511,625zM1503,668 1516,672 1514,715 1502,710zM1519,672 1543,675 1540,725 1519,722zM1515,730 1540,732 1538,783 1513,783zM1497,728 1510,730 1507,780 1495,778zM1505,888 1525,895 1528,925 1510,910zM82,755 102,752 102,768 82,770zM655,855 670,855 667,868 657,865zM39,1248H56V1262H39zM1130,853H1139V868H1130zM1063,655H1070V672H1063zM1168,655 1173,655 1173,675 1170,675zM667,770H673V790H667zM715,800H719V820H715z"/></g>
        <g class="stream thick"><path d="M1147,563 1170,572 1200,560 1250,540 1290,538 1320,505 1380,512 1470,510 1543,500"/></g>
        <g class="rail"><path d="M37,1175 160,1359M37,1180 150,1359M1543,130 1480,300 1450,500 1430,830 1400,1100 1360,1230M1385,360 1440,360 1480,310M1112,808 1050,840 1000,920 985,1010M800,1359 900,1290 1100,1290 1300,1310 1543,1330M810,1359 920,1280 1150,1285 1543,1345M830,1350 950,1270 1100,1260 1250,1240M860,1340 1080,1300 1350,1250M820,1359 950,1300 1300,1290 1460,1250M900,1310 1300,1305 1543,1310M710,860 770,860 770,980M730,1010 730,920 760,870"/></g>
        <g class="r1">
          <path d="M37,130 90,180 180,190M60,200 120,270M37,300 110,330 160,250M190,190 140,120M220,54 240,140 300,130 360,155M190,90 250,130M330,145 380,230 350,280M280,130 290,200 250,240M360,155 420,140 520,110M420,54 440,130 410,180M440,70 540,80M450,130 480,230 370,270M350,170 480,180M490,54 500,130 520,200M520,110 560,210 570,300M570,90 600,180 620,300M610,80 640,180M300,290 440,240 750,190M430,250 430,420 550,460M470,240 470,400M510,220 520,380 610,440M560,230 590,420M620,210 650,420M660,200 700,400 740,440M380,350 640,300M430,420 600,330M390,450 380,350M480,440 620,390M640,280 740,270M370,60 380,150M700,90 720,210 760,230M720,54 720,100M760,80 920,90M770,110 940,120M780,150 940,160M790,190 860,200M800,70 830,210M850,60 860,450M900,60 880,210M930,80 900,230M870,320 960,370M870,370 930,380"/>
          <path d="M940,130 1040,200M960,100 1000,70 1080,90M980,140 1090,90M1000,54 1100,110M1020,160 1100,60M1060,54 1090,180 1040,230M1110,70 1150,100M1130,180 1240,260M1090,240 1170,300 1250,350 1240,390M1120,330 1180,320M1190,230 1300,250 1400,230 1500,290M1200,54 1250,100 1390,110M1230,280 1310,310 1340,400M1100,310 1250,330M1160,440 1200,470M1090,380 1250,430 1310,470M1150,460 1190,400M1180,480 1230,430M1250,420 1360,430 1430,560M1040,440 1090,480M980,330 1040,400M1310,310 1400,280 1543,270M1240,90 1330,170 1290,190M120,400 250,410 300,400M130,370 290,380M150,320 280,340M170,290 280,310M130,490 160,460M180,730 280,790 370,790M130,450 110,500 160,580M37,560 90,590 140,560M37,690 160,700M160,740 100,760 37,820M45,1000 80,880 70,780M37,830 100,860 220,870M80,900 160,880M90,970 200,950M37,1010 210,1080M130,540 60,600 37,660M150,630 60,640M160,680 60,740M190,760 160,830 210,850M280,790 230,850M300,770 350,860M250,750 270,820 340,830M230,850 260,1040M250,900 350,920M260,960 330,970"/>
          <path d="M365,640 470,730 530,860 600,940 640,1020 610,1140 570,1160M430,770 460,760 510,800 400,830M440,650 490,700M455,770 510,900 560,880M370,830 470,900 570,960M380,920 450,910 520,1050M470,900 480,1010 390,1080M430,880 380,1000M520,890 500,1000 570,1060M400,1110 480,1050 550,1080M550,1080 620,1200M380,1180 470,1190 550,1280M470,1030 530,1150 500,1210M550,740 580,800 650,850M740,690 760,620 850,600M800,620 805,770 860,775 870,730M800,640 860,660M800,680 890,700M830,740 940,740M870,640 890,760M850,590 950,600M550,700 680,700M500,740 640,770M570,860 650,840M950,740 1050,720 1060,690 1050,570M1000,550 1050,600M830,830 790,870M790,920 810,990 880,970M760,1020 930,1020M890,940 950,960 1040,950M860,1050 930,1080M840,1110 900,1150M1050,940 1040,1010M980,1010 1100,1040M970,1030 1090,1060M960,1060 1080,1080M950,1090 1060,1110M940,1150 1010,1130M980,1010 940,1140M1020,1020 990,1120M1060,1030 1030,1120M740,900 760,1000 740,1060"/>
          <path d="M1060,770 1200,730M1210,730 1255,740M1260,740 1258,820 1300,830 1370,810M1300,750 1400,780 1410,840M1270,870 1300,820 1350,850M1350,970 1380,860M1130,1040 1350,970 1440,1089M1140,1040 1440,1010M1110,1070 1260,1050M1450,900 1543,880M1480,950 1543,940M1430,860 1440,1000 1543,1040M37,1240 180,1150 250,1120M80,1210 250,1190 220,1359M190,1130 300,1270M150,1180 230,1359M270,1180 400,1220M37,1300 80,1240 210,1320M280,1270 380,1240M300,1320 400,1300M430,1359 400,1300 530,1260M530,1270 560,1359M600,1200 650,1260M410,1340 470,1240 490,1150M720,1280 800,1290M1440,840 1543,830"/>
        </g>
        <g class="r2"><path d="M560,1359 620,1320 740,1280 780,1255M800,1140 830,1225 880,1160 930,1130 1007,1150M740,105 750,200 770,330 790,520 795,600 790,740 770,900 740,1080 700,1230 700,1275 720,1290 735,1359M740,690 760,680M550,780 640,710 740,690 770,650"/></g>
        <g class="r3"><path d="M110,54 155,150 180,190 285,300M185,195 165,290 120,390 125,490 180,740 230,1000 245,1060M37,515 120,395M285,300 345,285M285,300 345,580 365,710 372,900 400,1180 403,1310 385,1359M405,1310 420,1359M285,305 520,210 760,95 900,60 930,54M925,60 1100,245M1045,210 960,390 920,420 870,435 860,458 800,455M360,665 440,570 540,495 790,455M1000,590 900,890 820,1140 780,1255 550,1330M1060,700 1210,728 1190,800 1170,900 1100,1050 1100,1089M1130,925 1250,890 1430,840 1450,860 1480,970 1543,1160M1258,890 1258,1359M75,1210 180,1145 245,1090M37,1080 65,1130 75,1210 75,1359M75,1260 145,1359M1440,835 1543,830"/></g>
        <g id="y5"><path d="M1165,54 1100,260 1015,540 990,565 960,560 900,550 820,540 680,575 570,615 430,745 370,880 300,1010 245,1070 290,1359M1015,540 1018,570 1000,590 988,570M240,1060 240,1090"/></g>
        <use class="yc" href="#y5"/><use class="yi" href="#y5"/>
        <g class="s"><text x="650" y="149" style="--a:-14deg">вулиця Гетьмана Мазепи</text><text x="1041" y="190" style="--a:34deg">вулиця Грінченка</text><text x="999" y="306" style="--a:-50deg">вулиця Чигиринська</text><text x="774" y="382" style="--a:79deg">вулиця Івана Миколайчука</text><text x="312" y="443" style="--a:69deg">вулиця Замарстинівська</text><text x="559" y="503" style="--a:-11deg">вулиця Авраама Лінкольна</text><text x="78" y="457" style="--a:-40deg">улиця Варшавська</text><text x="196" y="870" style="--a:70deg">проспект В'ячеслава Чорновола</text><text x="388" y="1044" style="--a:77deg">вулиця Замарстинівська</text><text x="944" y="760" style="--a:-60deg">вулиця Богдана Хмельницького</text><text x="723" y="1150" style="--a:-70deg">вулиця Промислова</text><text x="1143" y="952" style="--a:-53deg">вулиця Ковельська</text><text x="1298" y="881" style="--a:-9deg">вулиця Пластова</text><text x="1478" y="962" style="--a:64deg">вулиця Богданівська</text><text x="1131" y="715" style="--a:7deg">вулиця Кукурудзяна</text><text x="948" y="1150" style="--a:1deg">вулиця Новознесенс</text><text x="585" y="1328" style="--a:-16deg">дана Хмельницького</text><text x="786" y="700" style="--a:-88deg">вулиця Промислова</text><text x="125" y="1332" style="--a:40deg">вулиця В</text></g>
        <g class="d"><text x="233" y="1065">ШЕВЧЕНКОВСКИЙ</text><text x="233" y="1107">РАЙОН</text></g>
        <g class="d sub"><text x="525" y="653">ЗАМАРСТЫНОВ</text><text x="914" y="297">ЗБОИЩА</text><text x="515" y="1241">ПОДЗАМЧЕ</text></g>
        <g class="l dark"><text x="389" y="247">Ференц Володимир -</text><text x="389" y="277">стоматолог-хірург, імпл...</text><text x="519" y="1172">Котельня Ruin Bar</text></g>
        <g class="l"><text x="976" y="584">Автовокзал Північний</text><text x="1477" y="507" fill="#4479c5">р. Полтва</text></g>
        <rect x="363" y="244" width="23" height="38" fill="#f88181"/><g class="bt big"><text x="374" y="263">H</text></g><use href="#food" x="494" y="1156" width="22" height="37" fill="#ff9e67"/><use href="#pin" x="948" y="554" width="24" height="54" fill="#7599ab"/>
        <rect class="bb" x="1073" y="290" width="31" height="25"/><rect class="bb" x="878" y="537" width="31" height="25"/><rect class="bb" x="597" y="593" width="31" height="25"/><rect class="bb" x="282" y="997" width="31" height="26"/><rect class="bg" x="269" y="1292" width="32" height="25"/>
        <g class="bt"><text x="1088" y="303">M06</text><text x="893" y="550">M06</text><text x="612" y="606">M06</text><text x="297" y="1010">M06</text><text x="285" y="1305">E471</text></g>
        <use href="#marker" x="769" y="603" width="44" height="133"/>
      </svg>
      <a class="map-btn" href="#">перейти на Google maps</a>
    </div>
  </section>

  <section class="office">
    <div class="info"><p class="city">Одесса,</p><p>ул. Столбовая, 28</p><p class="hours">пн - пт: 9⁰⁰-18⁰⁰ &nbsp; сб: 9⁰⁰-15⁰⁰</p><p>+38(048) 737-82-33</p><p>+38(048) 737-82-37</p><p>+38(067) 363-54-24</p><span class="line"></span></div>
    <div class="map">
      <svg class="half" viewBox="37 29 1506 696" preserveAspectRatio="none">
        <g class="green"><path d="M75,232 105,237 117,248 95,271zM543,490 634,508 620,553 533,540zM1342,270 1362,238 1382,242 1380,255 1360,280 1345,280zM1222,550 1235,543 1247,552 1245,581 1225,581zM1272,545 1350,545 1380,562 1440,572 1435,581 1275,581z"/></g>
        <g class="water"><path d="M1290,552 1320,549 1332,555 1322,566 1288,565z"/></g>
        <g class="rail"><path d="M240,29 380,120 520,230 600,310 700,390 860,530 1000,650 1080,725M255,29 400,130 540,250 620,330M270,29 410,120 560,245M290,29 430,130 530,220 600,300M300,29 450,140 580,270M320,29 440,110 500,150 640,160M340,40 430,110 480,180 560,240M270,45 370,110 470,180M400,50 450,100 570,130 640,110 640,80 610,60M380,29 400,60 480,140 560,160M37,190 120,205 200,250 240,310 250,420 270,560 285,600 285,725M285,680 330,630 400,600 430,612M560,245 700,245 850,285 1000,330 1100,355 1200,350 1290,280 1400,160 1480,50M570,260 680,270 740,250M600,310 700,330 800,330 890,335M900,330 930,370 1100,410 1200,400 1290,310 1400,180M1220,370 1130,450 1090,530 1100,725M860,580 800,610 780,700M1200,380 1120,440M740,590 800,585 860,600"/></g>
        <g class="r1">
          <path d="M50,180 50,350 60,590M37,110 100,150M60,110 90,140 60,175M90,80 130,140 130,190M37,50 120,110 210,40M130,29 180,90 240,60M40,90 150,29M180,100 120,170M210,110 150,200M250,130 180,215M290,150 220,230M330,140 300,200M350,150 340,230M180,100 330,190M230,85 330,150M210,240 330,170M110,150 230,200M37,310 110,215M37,350 160,225M37,390 200,240M45,430 220,270M80,440 240,300M140,440 245,340M60,240 230,440M100,230 240,400M150,240 245,350M37,290 180,440M37,350 120,440M190,440 250,380M45,440 250,442M55,470 255,475M60,500 260,500M60,530 265,530M60,560 270,560M80,440 80,590M105,440 100,590M130,440 125,590M155,440 150,590M180,440 175,590M205,440 200,590M230,440 230,590M60,595 280,600"/>
          <path d="M270,290 370,290M275,330 375,340M280,380 380,380M290,430 385,430M300,490 390,490M285,480 290,590M340,460 350,590M330,290 310,480M295,250 285,330M385,490 680,550M390,530 660,590M400,570 650,620M390,400 560,460M390,440 550,490M440,280 390,430M470,290 410,480M500,300 440,480M530,310 460,490M560,310 480,500M585,320 510,500M460,500 440,600M500,510 470,610M545,470 520,610M590,550 570,625M640,560 620,635M690,550 650,640M600,460 690,470M560,450 580,400 640,390M570,430 720,480M600,400 850,540M620,360 580,470M690,390 640,500M740,420 680,530M790,460 730,590M640,500 770,540M600,500 780,590M850,545 840,610 835,670M730,590 720,650M700,555 830,600M790,570 770,660M830,530 770,620"/>
          <path d="M520,29 530,70M700,29 695,140 740,150M720,60 790,60M690,200 720,190 730,240M640,270 640,300 700,300M740,270 720,330 690,350M800,250 810,330 860,350M800,270 870,290M710,350 880,390M780,300 760,380M880,320 900,400M700,350 690,390M830,400 900,430 930,460M870,380 850,450 900,470M900,420 870,530M940,400 1000,420 970,490M1000,380 990,440 1080,450M880,450 980,500 1090,530M960,470 950,540M920,400 890,480M1000,460 1100,480M870,60 900,40 920,80 870,110M870,140 920,130 930,240M850,200 920,260M940,80 1030,180 1140,320M960,60 1100,170 1250,250M940,110 1050,250 1170,310M980,40 1150,160 1270,240M940,160 1080,200 1210,290M940,200 1030,260 1120,320M1000,150 970,240M1040,120 1010,280M1090,110 1050,290M1130,130 1090,310M1180,150 1120,320M1220,190 1160,330M1040,50 1160,100 1290,190M1060,29 1230,130 1330,200M1090,60 1150,40 1280,140M1160,100 1200,29M1210,130 1260,60M1250,160 1320,90M1290,190 1350,110M1330,200 1380,140"/>
          <path d="M1300,29 1350,50 1440,29M1330,60 1400,90 1543,80M1380,40 1450,110 1500,60M1420,60 1543,40M1400,110 1420,130M1390,160 1543,170M1410,190 1500,240M1450,150 1480,220M1390,210 1350,300M1300,330 1380,400M1260,370 1350,430M1230,410 1340,470M1200,440 1330,490M1280,300 1330,350M1270,400 1240,470M1310,350 1270,430M1390,370 1440,460 1500,480M1420,350 1480,440M1460,310 1420,400M1480,300 1543,330M1440,420 1543,420M1500,400 1480,500M1360,450 1440,460M1380,280 1400,340M1250,480 1260,530M1300,490 1310,540M1350,510 1420,560 1543,560M1440,530 1430,590M1490,530 1480,640M1220,500 1230,540M1320,600 1320,650M1480,600 1543,610M1150,690 1250,725M1280,680 1270,725M1340,680 1340,725M1400,680 1400,725M1460,680 1460,725M1200,700 1543,700M1000,700 1090,660M1120,690 1100,620M1130,580 1180,640"/>
        </g>
        <g class="r2"><path d="M725,650 745,725M885,560 870,640M700,390 695,370"/></g>
        <g class="r3"><path d="M799,29 800,240 785,262 760,267 735,262 720,285 695,350M376,262 385,400 400,600 410,610 660,652 930,688 1045,710 1058,725M1340,492 1350,430 1380,350 1440,300 1490,240 1543,210M1137,490 1142,468 1160,458 1180,468 1178,485 1170,500 1170,530M1137,490 1170,540 1200,583M1170,480 1170,500"/></g>
        <g id="y6"><path d="M37,183 65,183 160,210 380,263 580,313 610,313 700,345 860,395 1040,455 1110,475 1200,483 1360,496 1470,507 1543,518M1220,37 1300,60 1370,128 1430,145 1500,135 1543,120M1125,725 1190,682 1240,670 1350,665 1543,665"/></g>
        <use class="yc" href="#y6"/><use class="yi" href="#y6"/>
        <g class="s"><text x="801" y="185" style="--a:89deg">вулиця Хімічна</text><text x="382" y="340" style="--a:87deg">Проселочна вулиця</text><text x="486" y="623" style="--a:9deg">Житомирська вулиця</text><text x="751" y="662" style="--a:9deg">Житомирська вулиця</text><text x="1535" y="222" style="--a:-45deg">вул</text></g>
        <g class="s amber big"><text x="1406" y="665" style="--a:0deg">Мельницька вулиця</text></g>
        <g class="d sub"><text x="1355" y="428">БУГАЕВКА</text></g>
        <g class="l dark"><text x="933" y="542">Наша игрушка Алекс оптом</text><text x="933" y="559">и в розницу Украина</text></g><g class="l"><text x="1292" y="583" fill="#3c9a5c">Одеський</text></g>
        <use href="#bag" x="905" y="541" width="24" height="22" fill="#4a90f5"/><use href="#bag" x="317" y="101" width="14" height="13" fill="#12b5f5"/>
        <rect class="bb" x="293" y="237" width="33" height="16"/><rect class="bb" x="618" y="318" width="33" height="16"/><rect class="bb" x="848" y="395" width="33" height="15"/><rect class="bb" x="1383" y="494" width="33" height="16"/><rect class="bg" x="1196" y="24" width="28" height="14"/>
        <g class="bt"><text x="309" y="245">M16</text><text x="635" y="326">M16</text><text x="864" y="403">M16</text><text x="1399" y="502">M16</text><text x="1210" y="31">E95</text></g>
        <use href="#marker" x="769" y="307" width="44" height="71"/>
      </svg>
      <a class="map-btn" href="#">перейти на Google maps</a>
    </div>
  </section>

  <section class="office">
    <div class="info"><p class="city">Полтава,</p><p>ул. Европейская, 146Д,</p><p class="hours">пн - пт: 9⁰⁰-18⁰⁰ &nbsp; сб: 9⁰⁰-15⁰⁰</p><p>+38(0532) 62-63-64</p><p>+38(067) 445-46-22</p><p>+38(067) 364-19-42</p><span class="line"></span></div>
    <div class="map">
      <svg class="half" viewBox="37 885 1506 696" preserveAspectRatio="none">
        <g class="field"><path d="M1210,1370 1543,1382 1543,1581 600,1581 650,1500 800,1520 1000,1505 1060,1500 1200,1440zM37,1581 37,1560 90,1581z"/></g>
        <g class="green"><path d="M275,920 335,922 330,990 300,998 273,992zM272,885H295V893H272zM443,943H460V975H450L441,990zM135,1007 153,1005 150,1057 133,1055zM464,1075H480V1100H464zM578,972 600,962 612,970 600,978zM1180,935 1203,935 1203,947 1185,947zM540,1325 570,1335 600,1305 615,1290 660,1300 730,1330 700,1350 690,1380 640,1400 630,1428 590,1415 580,1400 540,1385zM1112,1516H1123V1528H1112z"/></g>
        <g class="sand"><path d="M757,1310 790,1275 830,1268 837,1300 805,1310 800,1330 765,1322zM272,1000 330,995 345,1045 310,1045 300,1025 275,1022z"/></g>
        <g class="water"><path d="M292,1268 305,1258 325,1270 340,1280 378,1297 350,1299 295,1292zM45,1375 75,1378 80,1400 100,1390 115,1405 135,1410 160,1440 150,1447 120,1440 95,1420 50,1400zM1272,1375 1285,1380 1302,1420 1285,1427 1278,1400zM1255,915 1275,915 1272,924 1255,922zM1402,906 1425,900 1427,908 1405,920zM932,1151 950,1150 957,1158 940,1163zM1480,1160 1543,1158 1543,1180 1490,1187 1470,1175zM1355,1190 1400,1185 1410,1192 1350,1200zM1215,1200 1290,1190 1320,1200 1250,1203zM1268,1520 1310,1520 1310,1530 1290,1540zM305,1540 340,1537 350,1558 330,1560zM255,1500 290,1530 260,1520z"/></g>
        <g class="stream"><path d="M150,1445 200,1470 250,1500 290,1540 350,1540 400,1570 450,1581M1255,1020 1290,990 1320,960 1390,920 1543,890M1370,1240 1430,1250 1543,1260M1330,1205 1420,1225 1543,1230M1543,1205 1450,1190 1370,1155M1543,1128 1440,1110M37,1380 50,1360"/></g>
        <g class="r1">
          <path d="M37,905 120,905 200,915 260,905M37,935 100,950 250,945M60,885 70,990M90,890 85,990M120,900 110,1060M155,885 150,990M185,890 190,1000M215,885 210,960 190,990M245,885 240,1000M265,890 260,1000M37,970 190,965M37,1040 130,1035M60,1000 50,1090M90,1000 85,1070 130,1080M160,1010 165,1090M200,1000 190,1110M230,1010 240,1110M270,1000 280,1115M37,1070 290,1075M110,1095 220,1090M160,1060 270,1050M200,1030 300,1030M345,885 340,960M370,890 365,1000M400,885 390,1000M425,895 430,1010M470,885 475,1010M500,900 490,1010M525,885 520,1015M550,890 560,1020M590,890 590,1020M620,900 625,1020M340,910 460,905M340,945 420,940M460,935 650,920M470,960 660,950M470,985 570,990M560,905 640,900M350,1010 345,1070 480,1060M370,1020 400,1120M430,1030 430,1130M350,1080 460,1085M345,1045 500,1040M520,1020 510,1135M560,1020 555,1140M600,1030 600,1140M640,1030 650,1150M490,1060 680,1060M500,1090 690,1100M550,1120 690,1125M480,1040 500,1110"/>
          <path d="M700,930 740,970 790,960M690,900 780,920M720,890 740,960M770,885 760,970M800,900 790,1010M840,890 830,1000M870,885 880,970M900,910 960,930M700,960 850,960M820,930 1000,910M850,950 980,940M700,1060 800,1050M700,1090 860,1080M750,1040 760,1120M790,1030 800,1130M830,1030 820,1110M720,1120 860,1130M950,890 1020,900M970,970 1100,960M950,1020 1090,1000M1000,940 990,1100M1040,900 1050,1080M930,1060 1090,1060M920,1090 1080,1110M960,1040 950,1110M1110,900 1200,910 1250,990M1120,940 1180,960 1230,1030M1110,980 1180,990M1150,900 1160,1000M1200,900 1190,950M1110,1080 1240,1085M1120,1030 1200,1020M1230,1070 1300,1020 1400,950M1290,1040 1350,1100M1290,1090 1390,1030 1430,1060M1380,1120 1500,1080M1400,1000 1470,1090M1340,1000 1450,1010M1430,960 1543,960M1460,930 1500,1000M1500,1030 1543,1050"/>
          <path d="M37,1150 150,1155 155,1200 100,1200 110,1170M150,1200 180,1180M310,1095 325,1235M365,1125 380,1170 400,1140M400,1160 370,1220M455,1140 450,1581M455,1180 560,1170M455,1220 480,1210M500,1190 560,1260M550,1240 710,1250 770,1200M560,1200 570,1270M600,1180 590,1250M640,1180 640,1280M680,1200 680,1290M700,1170 740,1290M620,1290 730,1320M455,1260 540,1290M455,1310 540,1320M470,1330 540,1370M460,1390 560,1395M470,1360 460,1450M500,1370 490,1430M530,1380 520,1450M480,1430 560,1440M560,1410 570,1440M180,1420 300,1480 430,1500M220,1440 240,1480M560,1530 660,1500M37,1440 90,1480M670,1420 750,1440 840,1440M700,1380 840,1400M690,1410 680,1460M730,1350 720,1450M760,1340 740,1480M790,1350 780,1490M820,1370 830,1490M660,1450 850,1460M720,1360 830,1350M880,1300 900,1500M840,1340 900,1370 1060,1350M850,1380 1050,1380M860,1420 1060,1420M860,1460 1060,1460M930,1310 920,1490M970,1340 960,1500M1010,1360 1000,1480M850,1310 820,1400M880,1290 960,1400M850,1210 880,1300M830,1250 880,1260M850,1160 960,1200 1080,1240M900,1150 1090,1190M880,1170 870,1220M920,1130 900,1210M960,1140 950,1230M1000,1150 990,1260M1040,1160 1030,1280M940,1230 1060,1290M1100,1210 1320,1250 1290,1350M1100,1250 1300,1290M1090,1290 1290,1320M1130,1220 1110,1310M1170,1230 1150,1320M1210,1240 1190,1330M1250,1250 1230,1340M1320,1250 1543,1270M1320,1260 1400,1280M1310,1270 1543,1285M1075,1340 1190,1390 1070,1410M1080,1360 1160,1430M1070,1430 1150,1400M1110,1360 1120,1430M1310,1350 1310,1420 1400,1430M1280,1440 1420,1370M1090,1520 1085,1560M1140,1516 1130,1560M1130,1540 1230,1550"/>
        </g>
        <g class="r3"><path d="M37,980 60,990 200,997 290,1000 430,1015 680,1024 780,1018 950,1008M656,885 670,970 690,1080 697,1165M1105,885 1097,970 1110,1050 1090,1160 1075,1290 1060,1430M885,1110 950,1130 1095,1157M1110,1055 1230,1063 1280,1095 1370,1138 1410,1128 1470,1090 1495,1060 1500,1010 1515,915 1543,900M640,1485 840,1495 1007,1505M37,1540 90,1530 110,1550 150,1525 230,1530 260,1560 290,1581M935,1000 945,1015 950,1000M37,950 42,920"/></g>
        <g id="y7"><path d="M37,1115 160,1123 300,1132 400,1137 570,1142 700,1165 830,1200 930,1245 1060,1305 1110,1325 1270,1345 1400,1360 1543,1378M1025,885 960,990 890,1110 840,1180 800,1250 740,1330 680,1420 640,1490 585,1581M800,1190 850,1185 835,1215 845,1180M1290,1350 1305,1342 1320,1350 1305,1358z"/></g>
        <use class="yc" href="#y7"/><use class="yi" href="#y7"/>
        <g class="s"><text x="121" y="993" style="--a:2deg">вулиця Івана Мазепи</text><text x="358" y="1007" style="--a:2deg">вулиця Івана Мазепи</text><text x="594" y="1021" style="--a:3deg">вулиця Івана Мазепи</text><text x="855" y="1013" style="--a:-4deg">вулиця Степового Фронту</text><text x="680" y="1045" style="--a:82deg">вулиця Михайла Грушевського</text><text x="970" y="1131" style="--a:12deg">Автобазівська вулиця</text><text x="1083" y="1240" style="--a:-79deg">вулиця Кагамлика</text><text x="1064" y="1382" style="--a:-88deg">Щербанський Шлях</text><text x="1312" y="1114" style="--a:28deg">вулиця Сосюри</text><text x="1460" y="1067" style="--a:-50deg">Софії Ковалевської вулиця</text><text x="753" y="1490" style="--a:3deg">вулиця Віктора Андрієвського</text></g>
        <g class="d"><text x="1187" y="1044">ШЕВЧЕНКОВСКИЙ</text><text x="1187" y="1066">РАЙОН</text></g><g class="d sub"><text x="394" y="972">АЛМАЗНЫЙ</text></g>
        <g class="l dark"><text x="503" y="1213">ЭкоДрайв Полтава</text><text x="503" y="1229">(EcoDrive Poltava)</text></g>
        <g class="e"><text x="135" y="1161" fill="#4479c5">Епіцентр К</text><text x="838" y="1170" fill="#f2905a">МакДональдз</text><text x="721" y="1321" fill="#2a8740">Центральне</text><text x="721" y="1338" fill="#2a8740">міське кладовище</text></g>
        <use href="#bagpin" x="141" y="1146" width="23" height="30" fill="#4a90f5"/><use href="#foodpin" x="844" y="1154" width="23" height="30" fill="#ff9e67"/><use href="#pin" x="682" y="1348" width="24" height="31" fill="#3eb349"/><use href="#bag" x="477" y="1210" width="23" height="22" fill="#4a90f5"/>
        <rect class="bb" x="364" y="1127" width="31" height="14"/><rect class="bb" x="1096" y="1315" width="30" height="14"/><rect class="bb" x="1387" y="1353" width="30" height="14"/><rect class="bg" x="919" y="1022" width="34" height="15"/><rect class="bg" x="768" y="1260" width="34" height="14"/>
        <g class="bt"><text x="380" y="1134">M03</text><text x="1111" y="1322">M03</text><text x="1402" y="1360">M03</text><text x="936" y="1030">E584</text><text x="785" y="1267">E584</text></g>
        <use href="#marker" x="769" y="1178" width="44" height="71"/>
      </svg>
      <a class="map-btn" href="#">перейти на Google maps</a>
    </div>
  </section>

  <section class="office">
    <div class="info"><p class="city">Харьков,</p><p>ул. Мерефянское ш., 9а,</p><p class="hours">пн - пт: 9⁰⁰-18⁰⁰ &nbsp; сб: 9⁰⁰-15⁰⁰</p><p>+38(057) 760-18-81</p><p>+38(050) 424-94-03</p><p>+38(067) 463-83-93</p><span class="line"></span></div>
    <div class="map">
      <svg viewBox="37 54 1506 1305" preserveAspectRatio="none">
        <g class="air"><path d="M1090,54 1543,54 1543,610 1440,650 1360,760 1350,840 1300,880 1255,800 1200,850 1180,760 1150,640 1050,590 1010,580 880,520 880,350 920,310 990,320 1020,300 990,240 1040,150z"/></g>
        <g class="runway"><path d="M940,400 1100,375 1543,270 1543,305 1240,365 1190,385 1150,430 1170,445 1400,425 1395,410 1340,400 1543,370 1543,400 1430,415 1420,435 1543,440 1543,465 1255,462 1120,470 1000,495 975,480 960,420zM975,415 985,460 1010,480 1110,455 1170,380 1100,385z" fill-rule="evenodd"/></g>
        <g class="green"><path d="M920,615 930,608 938,620 947,685 930,696 918,670 913,630zM1052,660 1062,650 1075,690 1066,697zM968,838 990,820 992,835 970,852zM1340,862 1371,888 1350,1000 1320,1067 1313,1040 1325,940z"/></g>
        <g class="yard"><path d="M190,54H370L390,120 400,200 480,500 560,560 645,830 625,850 500,600 455,420 470,1000 445,1359 410,1359 425,900 350,830 270,450 220,150zM520,620 600,790 625,920 600,955 540,800z"/></g>
        <g class="rail"><path d="M190,54 240,220 320,520 400,820 430,940 440,1359M205,54 270,220 350,520 415,850 425,1000 420,1359M240,54 310,230 380,500 410,640M270,54 330,230 400,500 460,620M300,54 390,260 440,400 500,560M350,54 380,170 460,200 500,300 520,360M370,150 400,300 480,500 560,600 640,830M400,100 410,240 470,440 520,600 560,800M480,510 560,540 650,525 590,510 560,480M480,540 580,560 650,525M270,380 340,800 400,860M280,380 370,820 420,900M290,370 400,850M300,330 420,880M440,880 430,1359M485,580 610,930M500,600 620,920M510,590 600,950M455,840 470,640M430,1359 450,900 470,700"/></g>
        <g class="water"><path d="M488,990 505,1000 510,1018 524,1018 510,1040 505,1068 480,1080 463,1078 465,1040 475,1030zM517,840 527,845 537,885 522,893 515,865zM332,778 345,782 348,800 335,815 325,808zM341,748H346V762H341zM480,920 490,940 500,955 485,960zM523,912H528V925H523zM490,745H497V760H490z"/></g>
        <g class="stream"><path d="M37,865 60,835 80,880 105,850 125,860 130,940 180,960 205,1000 240,1060 270,1100 270,1359M60,630 45,680M562,1133 570,1240 615,1300 620,1359M935,1200 860,1359M1543,1040 1480,1130 1450,1250 1440,1359M490,700 495,745M245,1350 248,1359"/></g>
        <g class="r1">
          <path d="M70,54 37,140M90,60 60,230 37,300M160,54 120,270 90,370 37,600M150,150 130,340M90,325 200,345M200,345 190,440 220,500M100,380 270,440M60,500 160,520 290,560M170,540 170,640M37,650 110,690 220,810 300,800 320,770M250,590 220,810M220,810 200,890 140,950 37,970M220,860 420,840M190,900 240,1000 330,970 370,860M140,960 240,1130 260,1240 270,1359M280,880 320,1030M37,950 130,945M240,1000 290,1110 330,1140 370,1140 400,1150M320,1110 400,1090 410,1050M37,1170 180,1150M37,990 110,1010"/>
          <path d="M470,290 600,240 740,190M480,54 510,110 540,240M520,110 640,130 700,180M560,110 590,220M600,100 610,200M620,54 650,180 740,200M660,60 670,140M550,240 545,330 580,380 560,470M470,440 600,410 750,450M600,280 610,400 590,480M540,240 730,230M640,260 650,350 600,490 640,540M690,290 660,540 640,720M720,290 730,450 690,700 700,790M640,340 750,370M660,280 700,290 780,440 785,500 740,620M620,510 770,510M660,430 760,450M640,540 670,690 690,760M640,600 800,620M700,230 720,270 720,330 750,350M760,220 790,260 820,340 760,330M750,90 770,130 810,120M770,170 830,200M740,130 800,90 820,60M790,54 780,100M860,54 830,120 880,160M950,60 960,150 930,230M950,110 920,220M900,250 1020,310 1040,240"/>
          <path d="M420,180 470,170 480,430M410,170 450,210 440,290M480,300 500,400M560,310 530,400 490,470M690,700 700,780 640,900 580,960M690,770 710,850 640,1000M700,740 720,830M745,700 800,750 780,800M720,830 820,870 830,820M740,820 800,830M740,905 890,905 960,900M900,905 930,1010 990,1080M890,905 960,890M925,1020 960,1020 970,1090 930,1100M830,520 900,700 960,720M850,520 880,610 900,700M820,630 840,720 900,840M800,560 820,720M780,640 860,760 890,750 1080,750 1100,720 1140,710M870,640 920,700M800,720 870,810M890,530 970,550M890,550 960,570M890,570 960,590M900,590 960,600M1010,585 1110,545M960,620 990,700 1080,710M1090,680 1140,840 1150,920M1100,700 1180,870 1260,1089M1150,740 1170,840M1080,670 1150,700 1140,740M1030,640 1060,720M1000,630 980,690M980,580 1010,640"/>
          <path d="M1020,1020 1150,900 1220,840M970,850 1040,850 1130,830M1020,800 1120,780M1010,820 1000,900 970,920M1030,860 1060,960 1110,1040M1130,900 1160,980 1200,1080M1090,860 1120,950 1230,960M1080,960 1180,960M1160,920 1210,1010 1300,1020M1070,970 1050,1060M1170,990 1200,950M1200,990 1240,1089M1240,1010 1300,1010 1260,1089M1050,990 1150,1089M990,1089 1010,1060M1460,700 1400,870 1390,1010 1320,1089M1430,890 1420,970 1510,985M1490,800 1543,860 1530,950M1420,970 1370,1089M1510,990 1470,1100M1390,900 1440,850M1330,1050 1390,1060M1480,760 1440,720M620,1105 690,1110 620,1120 630,1220 650,1225M655,1150 655,1285 690,1285 695,1120M725,1185 935,1195M725,1020 725,1180 745,1359M770,1000 770,1140M750,1000 850,1010 865,1190M830,1190 830,1310M660,1030 690,1020M640,1100 680,1040M690,960 690,1020 740,1040 720,1110M710,960 740,980M520,840 530,980 570,1035 640,1030M600,970 650,940M700,880 640,950"/>
          <path d="M1050,1240 1180,1255 1260,1240M1210,1250 1250,1310 1340,1359M1250,1310 1300,1250M1270,1290 1340,1300 1400,1250M1330,1359 1400,1300M1360,1240 1380,1359M1270,1270 1360,1310M1000,1250 1000,1320M1300,1240 1290,1330M1410,1250 1380,1310"/>
          <path d="M880,350 880,480M1020,310 1090,300 1160,210 1250,150 1500,145 1520,190 1543,190M1240,810 1300,865 1360,830 1380,740 1450,650M1543,620 1440,680 1370,790"/>
        </g>
        <g class="r2"><path d="M470,285 560,260 700,220M790,620 860,750 915,725 990,740 1080,750M895,905 930,1010 1000,1080M1020,1020 1050,990M740,905 895,905"/></g>
        <g class="r3"><path d="M420,54 435,100 455,120 500,110 700,65M935,54 910,180 840,460"/></g>
        <g id="y8"><path d="M705,54 740,170 790,320 835,470 870,570 930,740 990,930 1010,1010 1045,1180 1075,1359M835,480 825,490 765,710 720,860 690,950 650,1030 590,1085 520,1112 430,1120 300,1132 180,1155 37,1183"/></g>
        <use class="yc" href="#y8"/><use class="yi" href="#y8"/>
        <g class="s"><text x="567" y="95" style="--a:-7deg">вулиця Південнопроектна</text><text x="876" y="315" style="--a:-66deg">проспект Льва Ландау</text></g><g class="s amber big"><text x="792" y="612" style="--a:-63deg">Мерефянське шосе</text></g>
        <g class="d sub"><text x="60" y="782">ХОР</text><text x="1506" y="800" fill="#8d99a6" font-weight="400">Молчань</text></g>
        <g class="mid"><text x="1113" y="592">Міжнародний</text><text x="1113" y="632">аеропорт</text><text x="1113" y="671">Харків</text></g>
        <g class="e"><text x="352" y="71">Локомотивне</text><text x="352" y="105">депо Основа</text><text x="552" y="663">Промзона</text></g>
        <use href="#pin" x="356" y="56" width="26" height="58" fill="#7599ab"/><use href="#pin" x="557" y="630" width="26" height="60" fill="#7599ab"/>
        <rect class="bb" x="786" y="365" width="33" height="28"/><rect class="bb" x="614" y="1030" width="33" height="28"/><rect class="bb" x="282" y="1118" width="33" height="28"/><rect class="bb" x="160" y="1143" width="33" height="27"/>
        <g class="bt"><text x="802" y="379">M18</text><text x="630" y="1045">M03</text><text x="298" y="1132">M03</text><text x="177" y="1157">M03</text></g>
        <use href="#marker" x="769" y="525" width="44" height="133"/>
      </svg>
      <a class="map-btn" href="#">перейти на Google maps</a>
    </div>
  </section>

  <section class="office">
    <div class="info"><p class="city">Черкассы,</p><p>ул. 30 лет Победы, 70,</p><p class="hours">пн - пт: 9⁰⁰-18⁰⁰ &nbsp; сб: 9⁰⁰-15⁰⁰</p><p>+38(0472) 59-98-70</p><p>+38 (067) 501-72-71</p><p>+38(067) 825-55-67</p><span class="line"></span></div>
    <div class="map">
      <svg viewBox="37 54 1506 1305" preserveAspectRatio="none">
        <g class="field"><path d="M37,54 318,54 350,288 590,235 587,54 1080,54 940,230 760,420 650,570 560,680 530,740 430,850 410,950 350,920 385,1040 335,1359 37,1359z"/></g>
        <g class="air"><path d="M350,920 375,897 400,990 500,1150 600,1340 590,1359 430,1359 413,1240 385,1040z"/></g><g class="runway"><path d="M475,1260 493,1240 505,1265 522,1359 500,1359z"/></g>
        <g class="green"><path d="M960,54 1035,54 1033,85 980,150 960,120zM976,320 992,305 1016,340 1003,365zM893,418 900,416 911,435 905,444 895,432zM1430,430 1440,425 1450,435 1445,465 1430,480 1423,470z"/></g>
        <g class="stream"><path d="M957,54 960,110 974,147M1447,1245 1530,1359"/></g>
        <g class="r1">
          <path d="M280,54 425,130 525,208M519,54 525,208 545,420 560,675 600,640 655,570 740,650M37,360 155,455M560,675 530,740 430,845 390,860 250,868 80,888M425,848 520,845 575,865 750,745M332,825 345,865M385,860 440,910 540,1000 640,1120 740,1260 830,1359M382,1040 335,1359M355,920 375,900 400,990 500,1150 560,1280 540,1359M355,920 415,1220 435,1359"/>
          <path d="M925,275 1020,400 1040,470 1070,590 1110,660 1175,740M855,430 1020,660M870,430 910,380 960,355M880,450 920,400 950,430 940,500M900,330 1000,410M990,54 1030,220 1070,380 1240,60M1070,380 1200,560 1300,720M1250,54 1420,280 1543,470M1240,60 1090,350M1020,180 1110,60M1030,200 1130,80M1040,220 1140,100M1050,240 1150,140M1060,260 1150,190M1030,110 1120,220M1050,80 1140,190M1080,60 1150,140M1150,54 1220,110M1160,80 1240,60M1120,330 1180,400M1150,280 1220,150 1270,160M1180,340 1280,160 1360,230M1190,350 1280,440 1340,330M1100,54 1180,150M1000,180 970,260M970,210 990,250 960,270M1280,130 1340,60 1420,54M1310,160 1380,90 1440,70M1340,190 1410,120 1470,110M1390,200 1470,90M1360,150 1450,140M1420,280 1410,360 1370,350M1380,340 1420,400 1370,430M1340,430 1400,420M1320,470 1400,450M1300,490 1400,500M1340,400 1420,430M1400,300 1543,480M1500,400 1420,590M1440,590 1480,440M1530,60 1543,190M1515,140 1543,180"/>
          <path d="M790,580 830,660 800,700M800,540 850,500 820,470M850,500 900,540 880,600M870,520 860,560 890,570M820,570 870,600 940,590M830,640 930,650 960,600 1040,690M850,600 860,700M900,640 890,680M780,700 850,770 900,850 870,910M870,710 850,780 830,820M840,770 880,730 940,740 950,790 930,830M900,750 870,800 920,850 980,830M960,700 1000,760 1080,760M1000,720 980,800 1030,860 980,920 900,860M1010,800 1040,820 1030,860M1060,700 1120,790M1030,660 1100,730M1060,760 1110,700M880,900 960,940M930,830 900,890M1060,590 1020,660M1060,600 1100,640M930,560 970,600 1000,540 1040,570M760,660 800,650 840,700M740,650 780,700 840,770M830,740 790,800M820,780 870,730M1090,800 1040,920M1110,870 1060,970M1080,600 1110,560 1070,540"/>
          <path d="M1175,740 1200,790 1220,950 1240,1089M1110,720 1190,780M1200,760 1260,740 1300,740M1210,800 1270,760M1220,830 1290,750M1230,850 1300,740M1050,1030 1090,980 1180,1089M1090,930 1180,900 1190,840M1130,890 1190,960 1140,1010M1060,980 1060,1089M1140,940 1180,920M1140,860 1180,900M1160,1020 1190,1060M900,940 960,1040M1300,720 1200,560M1220,620 1270,700M1280,510 1350,580M1000,610 960,650M1130,1240 1040,1359M1170,1240 1060,1359M1210,1240 1110,1359M1250,1240 1360,1359M1290,1240 1230,1359M1290,1240 1400,1330M1330,1240 1440,1359M1370,1240 1290,1359M1410,1270 1350,1359M1040,1310 1120,1320M1480,1200 1543,1280M1490,1160 1543,1220M1500,1110 1543,1160M1540,1030 1480,1170M1543,1080 1500,1190M1460,1250 1510,1180M1160,1280 1480,1300M1190,1330 1330,1290M990,1120 980,1150M1060,930 960,920"/>
        </g>
        <g class="r2"><path d="M820,780 855,720 900,705 1020,675 1110,640M1240,54 1250,60M1100,940 1115,870"/></g>
        <g class="r3"><path d="M1090,54 980,180 925,270 850,430 800,520 740,650 728,655M725,650 742,665 745,690 730,710 715,705 707,685 710,660zM740,650 745,710 770,750 860,880 970,1030 1000,1055M1525,54 1410,270 1350,400 1270,570 1200,720 1110,880 1030,1050M1005,1053 1025,1065 1028,1095 1015,1118 995,1110 988,1085zM965,1020 1000,1060M1040,1030 1020,1060M1110,1240 1200,1359"/><path d="M1180,735 1115,870"/></g>
        <g id="y9"><path d="M235,54 200,230 155,460 90,820 60,930 37,1010"/></g>
        <use class="yc" href="#y9"/><use class="yi" href="#y9"/>
        <g class="s"><text x="1028" y="130" style="--a:-37deg">вулиця Руставі</text><text x="776" y="576" style="--a:-49deg">вулиця Руставі</text><text x="1456" y="190" style="--a:-50deg">вулиця Сумгаїтська</text><text x="1240" y="626" style="--a:-50deg">вулиця Сумгаїтська</text><text x="1073" y="955" style="--a:-48deg">вулиця Сумгаїтська</text><text x="837" y="848" style="--a:40deg">вулиця 30-річчя Перемоги</text></g>
        <g class="d"><text x="1510" y="587">СОСНОВСК</text><text x="1528" y="630">РАЙОН</text></g><g class="d sub"><text x="764" y="913">ПОБЕДА</text></g>
        <g class="l dark"><text x="1275" y="473">Electron.ck.ua</text><text x="1109" y="534">КІТО</text></g><g class="e"><text x="970" y="1185" fill="#4479c5">Епіцентр К</text></g>
        <use href="#bag" x="1247" y="453" width="25" height="41" fill="#4a90f5"/><use href="#bag" x="1082" y="515" width="25" height="42" fill="#4a90f5"/><use href="#bagpin" x="974" y="1152" width="26" height="60" fill="#4a90f5"/>
        <rect class="bb" x="67" y="821" width="30" height="27"/><g class="bt"><text x="82" y="835">H16</text></g>
        <use href="#marker" x="769" y="603" width="44" height="133"/>
      </svg>
      <a class="map-btn" href="#">перейти на Google maps</a>
    </div>
  </section>
</main>

<footer class="footer">
  <a class="to-top" href="#"><svg width="106" height="28" viewBox="0 0 140 37"><path fill="#19191a" d="M0 37 20 34.500Q25 34 32 28L55 6Q61 0 69 0T84 7L106 28Q112 34 118 34.500L140 37z"/><path fill="none" stroke="#fff" stroke-width="1.500" d="M62 26.500l7-7 7 7M62 33l7-7 7 7"/></svg></a>
</footer>
</body>
</html>
```
FILE: styles.css
```css
* { box-sizing: border-box; }
body { margin: 0; background: #fefefe; color: #19191a; font-family: Montserrat, Inter, "Open Sans", sans-serif; font-weight: 500; }
a { color: inherit; text-decoration: none; }
p, h1 { margin: 0; }
.defs { position: absolute; width: 0; height: 0; }

.header { display: flex; height: 72px; align-items: flex-start; }
.logo { width: 331px; height: 72px; }
.logo svg { display: block; overflow: visible; }
.brand { font: italic 900 41px Roboto, sans-serif; stroke-width: 1.6px; stroke-linejoin: round; }
.brand text:first-child { stroke: #cb0a10; }
.brand text:last-child { stroke: #14356f; }
.country { font: italic 700 19px "Liberation Sans", sans-serif; fill: #cb0a10; }
.tagline { font: 400 10.5px "Open Sans", sans-serif; fill: #3a3a3a; }
.nav { display: flex; flex: 1; gap: 27px; padding-top: 25px; font-size: 12.2px; line-height: 19px; white-space: nowrap; color: #2b2b2c; }
.nav a { height: 21px; }
.nav .active { border-bottom: 2px solid #2b2b2c; }
.nav .shop { display: flex; align-items: center; gap: 9px; height: 19px; color: #cb0a10; }
.contact-btn { display: flex; align-items: center; justify-content: center; gap: 9px; width: 197px; height: 37px; margin: 18px 28px 0 0; background: #fff; border-radius: 2px; box-shadow: -7px 20px 22px -6px rgba(0, 0, 0, .13); font-size: 12.1px; white-space: nowrap; }

.page { width: 1065.4px; margin-left: 192.6px; padding-top: 67px; }
h1 { font-size: 30.2px; line-height: 36px; font-weight: 600; }
.subnav { display: flex; justify-content: space-between; align-items: center; height: 24px; margin: 54px 0 47.6px; }
.rule { width: 82px; height: 2px; margin-top: -4px; background: #19191a; }
.cities { display: flex; gap: 31px; font-size: 12.05px; font-weight: 400; color: #8f8f8f; }

.office { display: grid; grid-template-columns: 427.1px 638.3px; align-items: start; height: 404.04px; }
.info { font-size: 13.5px; line-height: 27px; color: #0e0e0f; }
.info.lower { padding-top: 15.5px; }
.city, .hours { color: #8f8f8f; font-weight: 400; }
.info .hours { margin: 16px 0 15.4px; }
.line { display: block; width: 82.5px; height: 1px; margin-top: 15px; background: #19191a; }

.map { position: relative; height: 328.5px; overflow: hidden; }
.map > svg { --sx: 2.36; --sy: 3.973; display: block; width: 100%; height: 100%; background: #e9e9eb; font-family: Roboto, sans-serif; }
.map > svg.half { --sy: 2.119; }
.map > svg.pale { background: #eff1f3; }
.map-btn { position: absolute; right: 30px; bottom: 30px; width: 197px; height: 38px; background: #fff; border-radius: 2px; box-shadow: -8px 20px 24px -2px rgba(0, 0, 0, .15); font-size: 12.1px; line-height: 38px; text-align: center; white-space: nowrap; }
.map-btn.up { bottom: 31px; }

/* map layers */
.map path { vector-effect: non-scaling-stroke; stroke-linejoin: round; }
.water { fill: #aadaff; }
.green { fill: #c8eac9; }
.hosp { fill: #fbe4e3; }
.sand { fill: #fdf4d9; }
.pool { fill: #e7edf0; }
.field { fill: #eeedeb; }
.air { fill: #e4e4e5; }
.runway { fill: #eeeef0; }
.yard { fill: #dfe1e3; }
.r1, .r2, .r3, .rail, .stream, .path-dash, .border { fill: none; stroke: #fff; stroke-linecap: round; }
.r1 { stroke-width: .75px; opacity: .85; }
.pale .r1 { stroke-width: 1.3px; opacity: 1; }
.r2 { stroke-width: 1.2px; }
.r3 { stroke-width: 2px; }
.pale .r3 { stroke-width: 3px; }
.rail { stroke: #d5d8da; stroke-width: .8px; opacity: .8; }
.stream { stroke: #aadaff; stroke-width: 1px; }
.stream.thick { stroke-width: 1.8px; }
.path-dash { stroke: #8fd0a0; stroke-width: .7px; stroke-dasharray: 2 1.5; }
.border { stroke: #b9b9bb; stroke-width: .8px; stroke-dasharray: 1 2; }
[id^="y"] { fill: none; }
.yc { stroke: #f6d47b; stroke-width: 3px; }
.yi { stroke: #ffeba5; stroke-width: 1.8px; }
.yc.wide { stroke-width: 4.2px; }
.yi.wide { stroke-width: 3px; }
.bb { fill: #3b76c9; }
.bg { fill: #5b9a3d; }

/* map labels keep their own proportions inside the stretched view box */
.map text { dominant-baseline: central; transform-box: fill-box; transform-origin: center; transform: scale(var(--sx), var(--sy)) rotate(var(--a, 0deg)); }
.s { font-size: 5.5px; fill: #626a70; text-anchor: middle; letter-spacing: .08px; }
.s text { stroke: #f4f4f5; stroke-width: .9px; paint-order: stroke; }
.s.thin { font-size: 4.9px; fill: #85898d; }
.s.river { font-size: 7px; fill: #5b8fd4; }
.s.river text { stroke: none; }
.s.amber { fill: #8a5f2d; font-size: 6px; }
.s.amber text { stroke: #fff2c4; }
.s.amber.big { font-size: 6.5px; }
.s.gray { font-size: 6px; fill: #8c8c8c; }
.l, .e { font-size: 7.2px; fill: #678594; }
.l text, .e text { stroke: #f6f6f7; stroke-width: 1px; paint-order: stroke; }
.map .l text { transform-origin: left center; }
.map .e text { transform-origin: right center; }
.e { text-anchor: end; }
.l.dark { fill: #666; }
.l.teal, .e.teal { fill: #1e9fd0; font-size: 6.6px; }
.d, .mid, .bt { text-anchor: middle; }
.d { font-size: 8.6px; font-weight: 500; letter-spacing: 1.5px; fill: #62748a; }
.d.sub { font-size: 7px; letter-spacing: 1.3px; fill: #7e90ad; }
.mid { font-size: 8.2px; font-weight: 500; fill: #4f7d8c; }
.town { font-size: 12.5px; letter-spacing: 4.5px; fill: #a0a5ad; text-anchor: middle; }
.bt { font-size: 5px; font-weight: 700; fill: #fff; }
.bt.big { font-size: 8px; }

.footer { position: relative; height: 49px; margin-top: 110.3px; background: #19191a; }
.to-top { position: absolute; left: 672.5px; bottom: 48px; height: 28px; }
.to-top svg { display: block; }
```
